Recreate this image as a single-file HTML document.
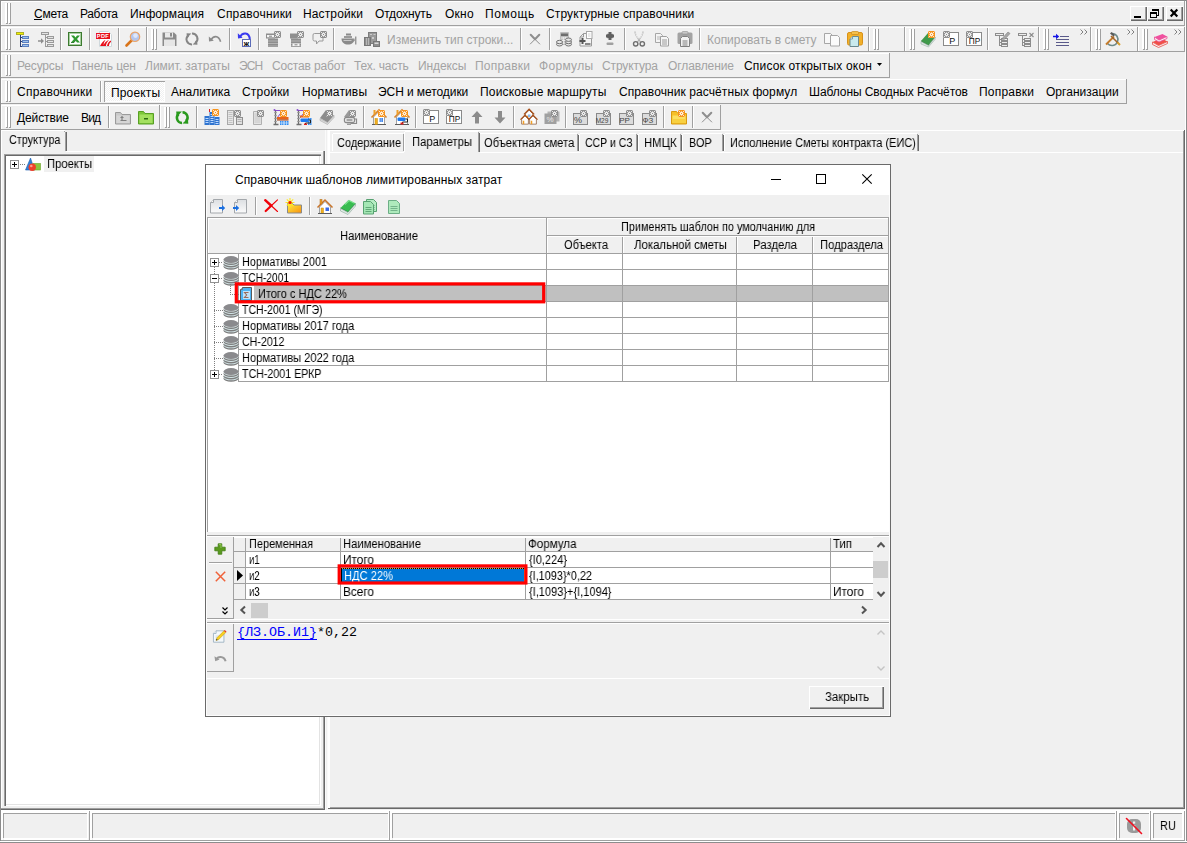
<!DOCTYPE html>
<html lang="ru"><head><meta charset="utf-8"><title>Смета</title><style>html,body{margin:0;padding:0}
body{width:1187px;height:843px;background:#f0f0f0;position:relative;overflow:hidden;font-family:"Liberation Sans",sans-serif;font-size:12px;line-height:1;color:#000}
div,span,svg{position:absolute;white-space:nowrap}
.m{transform-origin:0 0;will-change:transform}
svg{overflow:visible}
</style></head><body>
<div style="left:0px;top:0px;width:1187px;height:1px;background:#8c8c8c"></div>
<div style="left:0px;top:0px;width:1px;height:843px;background:#8c8c8c"></div>
<div style="left:1185px;top:1px;width:1px;height:842px;background:#fff"></div>
<div style="left:1186px;top:0px;width:1px;height:843px;background:#8c8c8c"></div>
<div style="left:0px;top:841px;width:1187px;height:1px;background:#fff"></div>
<div style="left:0px;top:842px;width:1187px;height:1px;background:#8c8c8c"></div>
<div style="left:1px;top:1px;width:1184px;height:1px;background:#fff"></div>
<div style="left:1px;top:1px;width:1px;height:25px;background:#fff"></div>
<div style="left:1px;top:25px;width:1184px;height:1px;background:#a0a0a0"></div>
<div style="left:1184px;top:1px;width:1px;height:25px;background:#a0a0a0"></div>
<div style="left:5px;top:3px;width:1px;height:20px;background:#fff"></div>
<div style="left:6px;top:3px;width:1px;height:20px;background:#fff"></div>
<div style="left:7px;top:3px;width:1px;height:21px;background:#a0a0a0"></div>
<div style="left:6px;top:23px;width:2px;height:1px;background:#a0a0a0"></div>
<div style="left:8px;top:3px;width:1px;height:20px;background:#fff"></div>
<div style="left:9px;top:3px;width:1px;height:20px;background:#fff"></div>
<div style="left:10px;top:3px;width:1px;height:21px;background:#a0a0a0"></div>
<div style="left:9px;top:23px;width:2px;height:1px;background:#a0a0a0"></div>
<span style="left:34px;top:8px;font-size:12px;color:#000;letter-spacing:-0.234px;">Смета</span>
<span style="left:80px;top:8px;font-size:12px;color:#000;letter-spacing:-0.342px;">Работа</span>
<span style="left:130px;top:8px;font-size:12px;color:#000;letter-spacing:0.068px;">Информация</span>
<span style="left:217px;top:8px;font-size:12px;color:#000;letter-spacing:0.210px;">Справочники</span>
<span style="left:303px;top:8px;font-size:12px;color:#000;letter-spacing:0.132px;">Настройки</span>
<span style="left:375px;top:8px;font-size:12px;color:#000;letter-spacing:-0.182px;">Отдохнуть</span>
<span style="left:445px;top:8px;font-size:12px;color:#000;letter-spacing:0.236px;">Окно</span>
<span style="left:485px;top:8px;font-size:12px;color:#000;letter-spacing:0.588px;">Помощь</span>
<span style="left:546px;top:8px;font-size:12px;color:#000;letter-spacing:0.121px;">Структурные справочники</span>
<div style="left:34px;top:19px;width:8px;height:1px;background:#000"></div>
<div style="left:1130px;top:6px;width:17px;height:15px;background:#f0f0f0;box-shadow:inset 1px 1px 0 #fff,inset -1px -1px 0 #696969,inset -2px -2px 0 #a0a0a0"></div>
<div style="left:1147px;top:6px;width:17px;height:15px;background:#f0f0f0;box-shadow:inset 1px 1px 0 #fff,inset -1px -1px 0 #696969,inset -2px -2px 0 #a0a0a0"></div>
<div style="left:1166px;top:6px;width:17px;height:15px;background:#f0f0f0;box-shadow:inset 1px 1px 0 #fff,inset -1px -1px 0 #696969,inset -2px -2px 0 #a0a0a0"></div>
<div style="left:1134px;top:16px;width:7px;height:2px;background:#000"></div>
<svg style="left:1147px;top:6px" width="17" height="15" viewBox="0 0 17 15"><g shape-rendering="crispEdges" fill="none" stroke="#000"><path d="M5 3h7v2h-7z" fill="#000" stroke="none"/><path d="M11.500 5v4h-2"/><path d="M3 6h7v2h-7z" fill="#000" stroke="none"/><path d="M3.500 8v3.500h6v-3.500"/></g></svg>
<svg style="left:1166px;top:6px" width="17" height="15" viewBox="0 0 17 15"><path d="M4.700 3.500l6.600 7M11.300 3.500l-6.600 7" stroke="#000" stroke-width="2.200"/></svg>
<div style="left:1px;top:27px;width:146px;height:1px;background:#fff"></div>
<div style="left:1px;top:27px;width:1px;height:25px;background:#fff"></div>
<div style="left:1px;top:51px;width:146px;height:1px;background:#a0a0a0"></div>
<div style="left:146px;top:27px;width:1px;height:25px;background:#a0a0a0"></div>
<div style="left:5px;top:29px;width:1px;height:20px;background:#fff"></div>
<div style="left:6px;top:29px;width:1px;height:20px;background:#fff"></div>
<div style="left:7px;top:29px;width:1px;height:21px;background:#a0a0a0"></div>
<div style="left:6px;top:49px;width:2px;height:1px;background:#a0a0a0"></div>
<div style="left:8px;top:29px;width:1px;height:20px;background:#fff"></div>
<div style="left:9px;top:29px;width:1px;height:20px;background:#fff"></div>
<div style="left:10px;top:29px;width:1px;height:21px;background:#a0a0a0"></div>
<div style="left:9px;top:49px;width:2px;height:1px;background:#a0a0a0"></div>
<div style="left:147px;top:27px;width:722px;height:1px;background:#fff"></div>
<div style="left:147px;top:27px;width:1px;height:25px;background:#fff"></div>
<div style="left:147px;top:51px;width:722px;height:1px;background:#a0a0a0"></div>
<div style="left:868px;top:27px;width:1px;height:25px;background:#a0a0a0"></div>
<div style="left:151px;top:29px;width:1px;height:20px;background:#fff"></div>
<div style="left:152px;top:29px;width:1px;height:20px;background:#fff"></div>
<div style="left:153px;top:29px;width:1px;height:21px;background:#a0a0a0"></div>
<div style="left:152px;top:49px;width:2px;height:1px;background:#a0a0a0"></div>
<div style="left:154px;top:29px;width:1px;height:20px;background:#fff"></div>
<div style="left:155px;top:29px;width:1px;height:20px;background:#fff"></div>
<div style="left:156px;top:29px;width:1px;height:21px;background:#a0a0a0"></div>
<div style="left:155px;top:49px;width:2px;height:1px;background:#a0a0a0"></div>
<div style="left:869px;top:27px;width:36px;height:1px;background:#fff"></div>
<div style="left:869px;top:27px;width:1px;height:25px;background:#fff"></div>
<div style="left:869px;top:51px;width:36px;height:1px;background:#a0a0a0"></div>
<div style="left:904px;top:27px;width:1px;height:25px;background:#a0a0a0"></div>
<div style="left:873px;top:29px;width:1px;height:20px;background:#fff"></div>
<div style="left:874px;top:29px;width:1px;height:20px;background:#fff"></div>
<div style="left:875px;top:29px;width:1px;height:21px;background:#a0a0a0"></div>
<div style="left:874px;top:49px;width:2px;height:1px;background:#a0a0a0"></div>
<div style="left:876px;top:29px;width:1px;height:20px;background:#fff"></div>
<div style="left:877px;top:29px;width:1px;height:20px;background:#fff"></div>
<div style="left:878px;top:29px;width:1px;height:21px;background:#a0a0a0"></div>
<div style="left:877px;top:49px;width:2px;height:1px;background:#a0a0a0"></div>
<div style="left:905px;top:27px;width:134px;height:1px;background:#fff"></div>
<div style="left:905px;top:27px;width:1px;height:25px;background:#fff"></div>
<div style="left:905px;top:51px;width:134px;height:1px;background:#a0a0a0"></div>
<div style="left:1038px;top:27px;width:1px;height:25px;background:#a0a0a0"></div>
<div style="left:909px;top:29px;width:1px;height:20px;background:#fff"></div>
<div style="left:910px;top:29px;width:1px;height:20px;background:#fff"></div>
<div style="left:911px;top:29px;width:1px;height:21px;background:#a0a0a0"></div>
<div style="left:910px;top:49px;width:2px;height:1px;background:#a0a0a0"></div>
<div style="left:912px;top:29px;width:1px;height:20px;background:#fff"></div>
<div style="left:913px;top:29px;width:1px;height:20px;background:#fff"></div>
<div style="left:914px;top:29px;width:1px;height:21px;background:#a0a0a0"></div>
<div style="left:913px;top:49px;width:2px;height:1px;background:#a0a0a0"></div>
<div style="left:1039px;top:27px;width:52px;height:1px;background:#fff"></div>
<div style="left:1039px;top:27px;width:1px;height:25px;background:#fff"></div>
<div style="left:1039px;top:51px;width:52px;height:1px;background:#a0a0a0"></div>
<div style="left:1090px;top:27px;width:1px;height:25px;background:#a0a0a0"></div>
<div style="left:1043px;top:29px;width:1px;height:20px;background:#fff"></div>
<div style="left:1044px;top:29px;width:1px;height:20px;background:#fff"></div>
<div style="left:1045px;top:29px;width:1px;height:21px;background:#a0a0a0"></div>
<div style="left:1044px;top:49px;width:2px;height:1px;background:#a0a0a0"></div>
<div style="left:1046px;top:29px;width:1px;height:20px;background:#fff"></div>
<div style="left:1047px;top:29px;width:1px;height:20px;background:#fff"></div>
<div style="left:1048px;top:29px;width:1px;height:21px;background:#a0a0a0"></div>
<div style="left:1047px;top:49px;width:2px;height:1px;background:#a0a0a0"></div>
<div style="left:1091px;top:27px;width:47px;height:1px;background:#fff"></div>
<div style="left:1091px;top:27px;width:1px;height:25px;background:#fff"></div>
<div style="left:1091px;top:51px;width:47px;height:1px;background:#a0a0a0"></div>
<div style="left:1137px;top:27px;width:1px;height:25px;background:#a0a0a0"></div>
<div style="left:1095px;top:29px;width:1px;height:20px;background:#fff"></div>
<div style="left:1096px;top:29px;width:1px;height:20px;background:#fff"></div>
<div style="left:1097px;top:29px;width:1px;height:21px;background:#a0a0a0"></div>
<div style="left:1096px;top:49px;width:2px;height:1px;background:#a0a0a0"></div>
<div style="left:1098px;top:29px;width:1px;height:20px;background:#fff"></div>
<div style="left:1099px;top:29px;width:1px;height:20px;background:#fff"></div>
<div style="left:1100px;top:29px;width:1px;height:21px;background:#a0a0a0"></div>
<div style="left:1099px;top:49px;width:2px;height:1px;background:#a0a0a0"></div>
<div style="left:1138px;top:27px;width:47px;height:1px;background:#fff"></div>
<div style="left:1138px;top:27px;width:1px;height:25px;background:#fff"></div>
<div style="left:1138px;top:51px;width:47px;height:1px;background:#a0a0a0"></div>
<div style="left:1184px;top:27px;width:1px;height:25px;background:#a0a0a0"></div>
<div style="left:1142px;top:29px;width:1px;height:20px;background:#fff"></div>
<div style="left:1143px;top:29px;width:1px;height:20px;background:#fff"></div>
<div style="left:1144px;top:29px;width:1px;height:21px;background:#a0a0a0"></div>
<div style="left:1143px;top:49px;width:2px;height:1px;background:#a0a0a0"></div>
<div style="left:1145px;top:29px;width:1px;height:20px;background:#fff"></div>
<div style="left:1146px;top:29px;width:1px;height:20px;background:#fff"></div>
<div style="left:1147px;top:29px;width:1px;height:21px;background:#a0a0a0"></div>
<div style="left:1146px;top:49px;width:2px;height:1px;background:#a0a0a0"></div>
<div style="left:60px;top:28px;width:1px;height:22px;background:#a0a0a0"></div>
<div style="left:61px;top:28px;width:1px;height:22px;background:#fff"></div>
<div style="left:89px;top:28px;width:1px;height:22px;background:#a0a0a0"></div>
<div style="left:90px;top:28px;width:1px;height:22px;background:#fff"></div>
<div style="left:118px;top:28px;width:1px;height:22px;background:#a0a0a0"></div>
<div style="left:119px;top:28px;width:1px;height:22px;background:#fff"></div>
<div style="left:229px;top:28px;width:1px;height:22px;background:#a0a0a0"></div>
<div style="left:230px;top:28px;width:1px;height:22px;background:#fff"></div>
<div style="left:258px;top:28px;width:1px;height:22px;background:#a0a0a0"></div>
<div style="left:259px;top:28px;width:1px;height:22px;background:#fff"></div>
<div style="left:333px;top:28px;width:1px;height:22px;background:#a0a0a0"></div>
<div style="left:334px;top:28px;width:1px;height:22px;background:#fff"></div>
<div style="left:520px;top:28px;width:1px;height:22px;background:#a0a0a0"></div>
<div style="left:521px;top:28px;width:1px;height:22px;background:#fff"></div>
<div style="left:549px;top:28px;width:1px;height:22px;background:#a0a0a0"></div>
<div style="left:550px;top:28px;width:1px;height:22px;background:#fff"></div>
<div style="left:624px;top:28px;width:1px;height:22px;background:#a0a0a0"></div>
<div style="left:625px;top:28px;width:1px;height:22px;background:#fff"></div>
<div style="left:699px;top:28px;width:1px;height:22px;background:#a0a0a0"></div>
<div style="left:700px;top:28px;width:1px;height:22px;background:#fff"></div>
<div style="left:987px;top:28px;width:1px;height:22px;background:#a0a0a0"></div>
<div style="left:988px;top:28px;width:1px;height:22px;background:#fff"></div>
<span style="left:387px;top:34px;font-size:12px;color:#a3a3a3;">Изменить тип строки...</span>
<span style="left:707px;top:34px;font-size:12px;color:#a3a3a3;letter-spacing:-0.018px;">Копировать в смету</span>
<svg style="left:1080px;top:29px" width="8" height="6" viewBox="0 0 8 6"><path d="M0.5 0.5l2.5 2.5l-2.5 2.5M4.5 0.5l2.5 2.5l-2.5 2.5" fill="none" stroke="#808080" stroke-width="1"/></svg>
<svg style="left:1127px;top:29px" width="8" height="6" viewBox="0 0 8 6"><path d="M0.5 0.5l2.5 2.5l-2.5 2.5M4.5 0.5l2.5 2.5l-2.5 2.5" fill="none" stroke="#808080" stroke-width="1"/></svg>
<svg style="left:1174px;top:29px" width="8" height="6" viewBox="0 0 8 6"><path d="M0.5 0.5l2.5 2.5l-2.5 2.5M4.5 0.5l2.5 2.5l-2.5 2.5" fill="none" stroke="#808080" stroke-width="1"/></svg>
<div style="left:1px;top:53px;width:889px;height:1px;background:#fff"></div>
<div style="left:1px;top:53px;width:1px;height:25px;background:#fff"></div>
<div style="left:1px;top:77px;width:889px;height:1px;background:#a0a0a0"></div>
<div style="left:889px;top:53px;width:1px;height:25px;background:#a0a0a0"></div>
<div style="left:5px;top:55px;width:1px;height:20px;background:#fff"></div>
<div style="left:6px;top:55px;width:1px;height:20px;background:#fff"></div>
<div style="left:7px;top:55px;width:1px;height:21px;background:#a0a0a0"></div>
<div style="left:6px;top:75px;width:2px;height:1px;background:#a0a0a0"></div>
<div style="left:8px;top:55px;width:1px;height:20px;background:#fff"></div>
<div style="left:9px;top:55px;width:1px;height:20px;background:#fff"></div>
<div style="left:10px;top:55px;width:1px;height:21px;background:#a0a0a0"></div>
<div style="left:9px;top:75px;width:2px;height:1px;background:#a0a0a0"></div>
<span style="left:17px;top:60px;font-size:12px;color:#a3a3a3;letter-spacing:-0.171px;">Ресурсы</span>
<span style="left:72px;top:60px;font-size:12px;color:#a3a3a3;letter-spacing:-0.092px;">Панель цен</span>
<span style="left:145px;top:60px;font-size:12px;color:#a3a3a3;">Лимит. затраты</span>
<span style="left:239px;top:60px;font-size:12px;color:#a3a3a3;letter-spacing:-0.834px;">ЭСН</span>
<span style="left:272px;top:60px;font-size:12px;color:#a3a3a3;letter-spacing:-0.165px;">Состав работ</span>
<span style="left:354px;top:60px;font-size:12px;color:#a3a3a3;letter-spacing:-0.191px;">Тех. часть</span>
<span style="left:418px;top:60px;font-size:12px;color:#a3a3a3;letter-spacing:-0.106px;">Индексы</span>
<span style="left:475px;top:60px;font-size:12px;color:#a3a3a3;letter-spacing:0.202px;">Поправки</span>
<span style="left:539px;top:60px;font-size:12px;color:#a3a3a3;letter-spacing:0.314px;">Формулы</span>
<span style="left:602px;top:60px;font-size:12px;color:#a3a3a3;letter-spacing:-0.130px;">Структура</span>
<span style="left:668px;top:60px;font-size:12px;color:#a3a3a3;letter-spacing:-0.101px;">Оглавление</span>
<span style="left:744px;top:60px;font-size:12px;color:#000;letter-spacing:0.177px;">Список открытых окон</span>
<svg style="left:877px;top:63px" width="5" height="3" viewBox="0 0 5 3"><path d="M0 0h5l-2.5 3z" fill="#000"/></svg>
<div style="left:1px;top:79px;width:1126px;height:1px;background:#fff"></div>
<div style="left:1px;top:79px;width:1px;height:25px;background:#fff"></div>
<div style="left:1px;top:103px;width:1126px;height:1px;background:#a0a0a0"></div>
<div style="left:1126px;top:79px;width:1px;height:25px;background:#a0a0a0"></div>
<div style="left:5px;top:81px;width:1px;height:20px;background:#fff"></div>
<div style="left:6px;top:81px;width:1px;height:20px;background:#fff"></div>
<div style="left:7px;top:81px;width:1px;height:21px;background:#a0a0a0"></div>
<div style="left:6px;top:101px;width:2px;height:1px;background:#a0a0a0"></div>
<div style="left:8px;top:81px;width:1px;height:20px;background:#fff"></div>
<div style="left:9px;top:81px;width:1px;height:20px;background:#fff"></div>
<div style="left:10px;top:81px;width:1px;height:21px;background:#a0a0a0"></div>
<div style="left:9px;top:101px;width:2px;height:1px;background:#a0a0a0"></div>
<div style="left:100px;top:81px;width:1px;height:21px;background:#a0a0a0"></div>
<div style="left:101px;top:81px;width:1px;height:21px;background:#fff"></div>
<div style="left:104px;top:81px;width:61px;height:21px;background:repeating-conic-gradient(#fff 0 25%,#f0f0f0 0 50%) 0 0/2px 2px;box-shadow:inset 1px 1px 0 #a0a0a0,inset -1px -1px 0 #fff"></div>
<span style="left:17px;top:86px;font-size:12px;color:#000;letter-spacing:0.240px;">Справочники</span>
<span style="left:171px;top:86px;font-size:12px;color:#000;letter-spacing:-0.026px;">Аналитика</span>
<span style="left:242px;top:86px;font-size:12px;color:#000;letter-spacing:0.188px;">Стройки</span>
<span style="left:302px;top:86px;font-size:12px;color:#000;letter-spacing:0.141px;">Нормативы</span>
<span style="left:378px;top:86px;font-size:12px;color:#000;letter-spacing:-0.077px;">ЭСН и методики</span>
<span style="left:480px;top:86px;font-size:12px;color:#000;letter-spacing:0.197px;">Поисковые маршруты</span>
<span style="left:619px;top:86px;font-size:12px;color:#000;letter-spacing:0.088px;">Справочник расчётных формул</span>
<span style="left:809px;top:86px;font-size:12px;color:#000;letter-spacing:-0.082px;">Шаблоны Сводных Расчётов</span>
<span style="left:979px;top:86px;font-size:12px;color:#000;letter-spacing:0.202px;">Поправки</span>
<span style="left:1046px;top:86px;font-size:12px;color:#000;letter-spacing:0.021px;">Организации</span>
<span style="left:111px;top:87px;font-size:12px;color:#000;letter-spacing:0.157px;">Проекты</span>
<div style="left:1px;top:105px;width:159px;height:1px;background:#fff"></div>
<div style="left:1px;top:105px;width:1px;height:25px;background:#fff"></div>
<div style="left:1px;top:129px;width:159px;height:1px;background:#a0a0a0"></div>
<div style="left:159px;top:105px;width:1px;height:25px;background:#a0a0a0"></div>
<div style="left:5px;top:107px;width:1px;height:20px;background:#fff"></div>
<div style="left:6px;top:107px;width:1px;height:20px;background:#fff"></div>
<div style="left:7px;top:107px;width:1px;height:21px;background:#a0a0a0"></div>
<div style="left:6px;top:127px;width:2px;height:1px;background:#a0a0a0"></div>
<div style="left:8px;top:107px;width:1px;height:20px;background:#fff"></div>
<div style="left:9px;top:107px;width:1px;height:20px;background:#fff"></div>
<div style="left:10px;top:107px;width:1px;height:21px;background:#a0a0a0"></div>
<div style="left:9px;top:127px;width:2px;height:1px;background:#a0a0a0"></div>
<div style="left:160px;top:105px;width:561px;height:1px;background:#fff"></div>
<div style="left:160px;top:105px;width:1px;height:25px;background:#fff"></div>
<div style="left:160px;top:129px;width:561px;height:1px;background:#a0a0a0"></div>
<div style="left:720px;top:105px;width:1px;height:25px;background:#a0a0a0"></div>
<div style="left:164px;top:107px;width:1px;height:20px;background:#fff"></div>
<div style="left:165px;top:107px;width:1px;height:20px;background:#fff"></div>
<div style="left:166px;top:107px;width:1px;height:21px;background:#a0a0a0"></div>
<div style="left:165px;top:127px;width:2px;height:1px;background:#a0a0a0"></div>
<div style="left:167px;top:107px;width:1px;height:20px;background:#fff"></div>
<div style="left:168px;top:107px;width:1px;height:20px;background:#fff"></div>
<div style="left:169px;top:107px;width:1px;height:21px;background:#a0a0a0"></div>
<div style="left:168px;top:127px;width:2px;height:1px;background:#a0a0a0"></div>
<span style="left:17px;top:112px;font-size:12px;color:#000;letter-spacing:-0.109px;">Действие</span>
<span style="left:81px;top:112px;font-size:12px;color:#000;letter-spacing:-0.809px;">Вид</span>
<div style="left:108px;top:106px;width:1px;height:22px;background:#a0a0a0"></div>
<div style="left:109px;top:106px;width:1px;height:22px;background:#fff"></div>
<div style="left:196px;top:106px;width:1px;height:22px;background:#a0a0a0"></div>
<div style="left:197px;top:106px;width:1px;height:22px;background:#fff"></div>
<div style="left:363px;top:106px;width:1px;height:22px;background:#a0a0a0"></div>
<div style="left:364px;top:106px;width:1px;height:22px;background:#fff"></div>
<div style="left:415px;top:106px;width:1px;height:22px;background:#a0a0a0"></div>
<div style="left:416px;top:106px;width:1px;height:22px;background:#fff"></div>
<div style="left:513px;top:106px;width:1px;height:22px;background:#a0a0a0"></div>
<div style="left:514px;top:106px;width:1px;height:22px;background:#fff"></div>
<div style="left:565px;top:106px;width:1px;height:22px;background:#a0a0a0"></div>
<div style="left:566px;top:106px;width:1px;height:22px;background:#fff"></div>
<div style="left:663px;top:106px;width:1px;height:22px;background:#a0a0a0"></div>
<div style="left:664px;top:106px;width:1px;height:22px;background:#fff"></div>
<div style="left:692px;top:106px;width:1px;height:22px;background:#a0a0a0"></div>
<div style="left:693px;top:106px;width:1px;height:22px;background:#fff"></div>
<div style="left:1px;top:810px;width:1184px;height:3px;background:#fff"></div>
<div style="left:1px;top:840px;width:1184px;height:1px;background:#a0a0a0"></div>
<div style="left:1184px;top:811px;width:1px;height:30px;background:#a0a0a0"></div>
<div style="left:3px;top:813px;width:84px;height:1px;background:#a0a0a0"></div>
<div style="left:3px;top:813px;width:1px;height:25px;background:#a0a0a0"></div>
<div style="left:4px;top:838px;width:84px;height:2px;background:#fff"></div>
<div style="left:87px;top:813px;width:1px;height:27px;background:#fff"></div>
<div style="left:2px;top:813px;width:1px;height:27px;background:#fff"></div>
<div style="left:1px;top:813px;width:1px;height:27px;background:#fff"></div>
<div style="left:92px;top:813px;width:296px;height:1px;background:#a0a0a0"></div>
<div style="left:92px;top:813px;width:1px;height:25px;background:#a0a0a0"></div>
<div style="left:93px;top:838px;width:296px;height:2px;background:#fff"></div>
<div style="left:388px;top:813px;width:1px;height:27px;background:#fff"></div>
<div style="left:91px;top:813px;width:1px;height:27px;background:#fff"></div>
<div style="left:90px;top:813px;width:1px;height:27px;background:#fff"></div>
<div style="left:392px;top:813px;width:723px;height:1px;background:#a0a0a0"></div>
<div style="left:392px;top:813px;width:1px;height:25px;background:#a0a0a0"></div>
<div style="left:393px;top:838px;width:723px;height:2px;background:#fff"></div>
<div style="left:1115px;top:813px;width:1px;height:27px;background:#fff"></div>
<div style="left:391px;top:813px;width:1px;height:27px;background:#fff"></div>
<div style="left:390px;top:813px;width:1px;height:27px;background:#fff"></div>
<div style="left:1119px;top:813px;width:30px;height:1px;background:#a0a0a0"></div>
<div style="left:1119px;top:813px;width:1px;height:25px;background:#a0a0a0"></div>
<div style="left:1120px;top:838px;width:30px;height:2px;background:#fff"></div>
<div style="left:1149px;top:813px;width:1px;height:27px;background:#fff"></div>
<div style="left:1118px;top:813px;width:1px;height:27px;background:#fff"></div>
<div style="left:1117px;top:813px;width:1px;height:27px;background:#fff"></div>
<div style="left:1153px;top:813px;width:29px;height:1px;background:#a0a0a0"></div>
<div style="left:1153px;top:813px;width:1px;height:25px;background:#a0a0a0"></div>
<div style="left:1154px;top:838px;width:29px;height:2px;background:#fff"></div>
<div style="left:1182px;top:813px;width:1px;height:27px;background:#fff"></div>
<div style="left:1152px;top:813px;width:1px;height:27px;background:#fff"></div>
<div style="left:1151px;top:813px;width:1px;height:27px;background:#fff"></div>
<div style="left:1183px;top:811px;width:1px;height:29px;background:#fff"></div>
<div style="left:89px;top:811px;width:1px;height:29px;background:#a0a0a0"></div>
<div style="left:389px;top:811px;width:1px;height:29px;background:#a0a0a0"></div>
<div style="left:1116px;top:811px;width:1px;height:29px;background:#a0a0a0"></div>
<div style="left:1150px;top:811px;width:1px;height:29px;background:#a0a0a0"></div>
<span class="m" style="left:1160px;top:820px;font-size:12.5px;color:#000;transform:scaleX(0.886);">RU</span>
<div style="left:1px;top:130px;width:64px;height:1px;background:#fff"></div>
<div style="left:1px;top:130px;width:1px;height:680px;background:#fff"></div>
<div style="left:65px;top:132px;width:1px;height:19px;background:#a0a0a0"></div>
<div style="left:66px;top:132px;width:1px;height:19px;background:#696969"></div>
<div style="left:64px;top:131px;width:1px;height:1px;background:#a0a0a0"></div>
<div style="left:66px;top:151px;width:257px;height:1px;background:#fff"></div>
<div style="left:323px;top:151px;width:1px;height:659px;background:#a0a0a0"></div>
<div style="left:324px;top:151px;width:1px;height:659px;background:#696969"></div>
<div style="left:1px;top:808px;width:323px;height:1px;background:#a0a0a0"></div>
<div style="left:1px;top:809px;width:324px;height:1px;background:#696969"></div>
<span class="m" style="left:9px;top:134px;font-size:12.5px;color:#000;transform:scaleX(0.868);">Структура</span>
<div style="left:4px;top:154px;width:317px;height:652px;background:#fff;box-shadow:inset 1px 1px 0 #a0a0a0,inset 2px 2px 0 #696969,inset -1px -1px 0 #fff,inset -2px -2px 0 #e3e3e3"></div>
<div style="left:10px;top:160px;width:9px;height:9px;background:#fff;border:1px solid #919191;box-sizing:border-box"></div>
<div style="left:12px;top:164px;width:5px;height:1px;background:#000"></div>
<div style="left:14px;top:162px;width:1px;height:5px;background:#000"></div>
<div style="left:20px;top:164px;width:5px;height:1px;background:repeating-linear-gradient(90deg,#808080 0 1px,transparent 1px 2px)"></div>
<svg style="left:25px;top:157px" width="16" height="15" viewBox="0 0 16 15"><path d="M5.5 1L0.5 13h9z" fill="#2f7fd6" stroke="#1c5fb0" stroke-width=".6"/><rect x="8" y="6.5" width="7.5" height="6.5" fill="#8cc63f" stroke="#6aa52a" stroke-width=".6"/><circle cx="7.2" cy="10.3" r="3.7" fill="#f0402c"/><circle cx="6.3" cy="9" r="1.3" fill="#ff9c8c"/></svg>
<div style="left:44px;top:156px;width:50px;height:16px;background:#f0f0f0"></div>
<span class="m" style="left:47px;top:158px;font-size:12.5px;color:#000;transform:scaleX(0.897);">Проекты</span>
<div style="left:325px;top:130px;width:1px;height:680px;background:#fafafa"></div>
<div style="left:327px;top:130px;width:1px;height:680px;background:#fafafa"></div>
<div style="left:328px;top:130px;width:856px;height:1px;background:#fff"></div>
<div style="left:328px;top:130px;width:1px;height:679px;background:#fff"></div>
<div style="left:329px;top:130px;width:1px;height:679px;background:#fff"></div>
<div style="left:1183px;top:131px;width:1px;height:677px;background:#a0a0a0"></div>
<div style="left:330px;top:807px;width:854px;height:1px;background:#a0a0a0"></div>
<div style="left:328px;top:808px;width:857px;height:1px;background:#696969"></div>
<div style="left:1184px;top:130px;width:1px;height:679px;background:#696969"></div>
<div style="left:330px;top:152px;width:853px;height:1px;background:#fff"></div>
<div style="left:333px;top:133px;width:70px;height:1px;background:#fff"></div>
<div style="left:332px;top:134px;width:1px;height:17px;background:#fff"></div>
<div style="left:403px;top:134px;width:1px;height:17px;background:#a0a0a0"></div>
<div style="left:404px;top:135px;width:1px;height:16px;background:#696969"></div>
<span class="m" style="left:337px;top:137px;font-size:12.5px;color:#000;transform:scaleX(0.879);">Содержание</span>
<div style="left:480px;top:133px;width:97px;height:1px;background:#fff"></div>
<div style="left:479px;top:134px;width:1px;height:17px;background:#fff"></div>
<div style="left:577px;top:134px;width:1px;height:17px;background:#a0a0a0"></div>
<div style="left:578px;top:135px;width:1px;height:16px;background:#696969"></div>
<span class="m" style="left:484px;top:137px;font-size:12.5px;color:#000;transform:scaleX(0.897);">Объектная смета</span>
<div style="left:580px;top:133px;width:56px;height:1px;background:#fff"></div>
<div style="left:579px;top:134px;width:1px;height:17px;background:#fff"></div>
<div style="left:636px;top:134px;width:1px;height:17px;background:#a0a0a0"></div>
<div style="left:637px;top:135px;width:1px;height:16px;background:#696969"></div>
<span class="m" style="left:585px;top:137px;font-size:12.5px;color:#000;transform:scaleX(0.840);">ССР и СЗ</span>
<div style="left:639px;top:133px;width:41px;height:1px;background:#fff"></div>
<div style="left:638px;top:134px;width:1px;height:17px;background:#fff"></div>
<div style="left:680px;top:134px;width:1px;height:17px;background:#a0a0a0"></div>
<div style="left:681px;top:135px;width:1px;height:16px;background:#696969"></div>
<span class="m" style="left:644px;top:137px;font-size:12.5px;color:#000;transform:scaleX(0.906);">НМЦК</span>
<div style="left:683px;top:133px;width:39px;height:1px;background:#fff"></div>
<div style="left:682px;top:134px;width:1px;height:17px;background:#fff"></div>
<div style="left:722px;top:134px;width:1px;height:17px;background:#a0a0a0"></div>
<div style="left:723px;top:135px;width:1px;height:16px;background:#696969"></div>
<span class="m" style="left:689px;top:137px;font-size:12.5px;color:#000;transform:scaleX(0.866);">ВОР</span>
<div style="left:725px;top:133px;width:192px;height:1px;background:#fff"></div>
<div style="left:724px;top:134px;width:1px;height:17px;background:#fff"></div>
<div style="left:917px;top:134px;width:1px;height:17px;background:#a0a0a0"></div>
<div style="left:918px;top:135px;width:1px;height:16px;background:#696969"></div>
<span class="m" style="left:730px;top:137px;font-size:12.5px;color:#000;transform:scaleX(0.877);">Исполнение Сметы контракта (ЕИС)</span>
<div style="left:404px;top:131px;width:76px;height:22px;background:#f0f0f0"></div>
<div style="left:405px;top:131px;width:73px;height:1px;background:#fff"></div>
<div style="left:404px;top:132px;width:1px;height:20px;background:#fff"></div>
<div style="left:478px;top:132px;width:1px;height:20px;background:#a0a0a0"></div>
<div style="left:479px;top:133px;width:1px;height:19px;background:#696969"></div>
<span class="m" style="left:412px;top:136px;font-size:12.5px;color:#000;transform:scaleX(0.899);">Параметры</span>
<div style="left:205px;top:164px;width:686px;height:553px;background:#f0f0f0;border:1px solid #6a6a6a;box-sizing:border-box;box-shadow:inset 0 0 0 1px #fcfcfc"></div>
<div style="left:206px;top:165px;width:684px;height:30px;background:#fff"></div>
<span style="left:235px;top:174px;font-size:12px;color:#000;letter-spacing:0.105px;">Справочник шаблонов лимитированных затрат</span>
<div style="left:771px;top:179px;width:10px;height:1px;background:#000"></div>
<div style="left:816px;top:174px;width:10px;height:10px;border:1px solid #000;box-sizing:border-box"></div>
<svg style="left:862px;top:174px" width="10" height="10" viewBox="0 0 10 10"><path d="M0.300 0.300l9.400 9.400M9.700 0.300l-9.400 9.400" stroke="#000" stroke-width="1.100" fill="none"/></svg>
<div style="left:255px;top:197px;width:1px;height:18px;background:#a0a0a0"></div>
<div style="left:256px;top:197px;width:1px;height:18px;background:#fff"></div>
<div style="left:309px;top:197px;width:1px;height:18px;background:#a0a0a0"></div>
<div style="left:310px;top:197px;width:1px;height:18px;background:#fff"></div>
<div style="left:207px;top:217px;width:682px;height:315px;background:#fff"></div>
<div style="left:207px;top:217px;width:682px;height:36px;background:#f0f0f0"></div>
<div style="left:207px;top:217px;width:682px;height:1px;background:#a0a0a0"></div>
<div style="left:207px;top:217px;width:1px;height:315px;background:#a0a0a0"></div>
<div style="left:207px;top:253px;width:682px;height:1px;background:#a0a0a0"></div>
<div style="left:547px;top:235px;width:342px;height:1px;background:#a0a0a0"></div>
<div style="left:546px;top:217px;width:1px;height:165px;background:#a0a0a0"></div>
<div style="left:622px;top:236px;width:1px;height:146px;background:#a0a0a0"></div>
<div style="left:736px;top:236px;width:1px;height:146px;background:#a0a0a0"></div>
<div style="left:812px;top:236px;width:1px;height:146px;background:#a0a0a0"></div>
<div style="left:888px;top:236px;width:1px;height:146px;background:#a0a0a0"></div>
<div style="left:888px;top:217px;width:1px;height:165px;background:#a0a0a0"></div>
<div style="left:208px;top:218px;width:338px;height:1px;background:#fff"></div>
<div style="left:208px;top:218px;width:1px;height:35px;background:#fff"></div>
<div style="left:547px;top:218px;width:341px;height:1px;background:#fff"></div>
<div style="left:547px;top:218px;width:1px;height:17px;background:#fff"></div>
<div style="left:547px;top:236px;width:1px;height:17px;background:#fff"></div>
<div style="left:623px;top:236px;width:1px;height:17px;background:#fff"></div>
<div style="left:737px;top:236px;width:1px;height:17px;background:#fff"></div>
<div style="left:813px;top:236px;width:1px;height:17px;background:#fff"></div>
<div style="left:547px;top:236px;width:341px;height:1px;background:#fff"></div>
<div style="left:254px;top:286px;width:634px;height:16px;background:#c0c0c0"></div>
<div style="left:546px;top:286px;width:1px;height:16px;background:#a0a0a0"></div>
<div style="left:622px;top:286px;width:1px;height:16px;background:#a0a0a0"></div>
<div style="left:736px;top:286px;width:1px;height:16px;background:#a0a0a0"></div>
<div style="left:812px;top:286px;width:1px;height:16px;background:#a0a0a0"></div>
<div style="left:888px;top:286px;width:1px;height:16px;background:#a0a0a0"></div>
<div style="left:238px;top:269px;width:651px;height:1px;background:#a0a0a0"></div>
<div style="left:238px;top:285px;width:651px;height:1px;background:#a0a0a0"></div>
<div style="left:238px;top:301px;width:651px;height:1px;background:#a0a0a0"></div>
<div style="left:238px;top:317px;width:651px;height:1px;background:#a0a0a0"></div>
<div style="left:238px;top:333px;width:651px;height:1px;background:#a0a0a0"></div>
<div style="left:238px;top:349px;width:651px;height:1px;background:#a0a0a0"></div>
<div style="left:238px;top:365px;width:651px;height:1px;background:#a0a0a0"></div>
<div style="left:238px;top:381px;width:651px;height:1px;background:#a0a0a0"></div>
<div style="left:238px;top:254px;width:1px;height:128px;background:#a0a0a0"></div>
<span class="m" style="left:340px;top:230px;font-size:12.5px;color:#000;transform:scaleX(0.900);">Наименование</span>
<span class="m" style="left:621px;top:221px;font-size:12.5px;color:#000;transform:scaleX(0.869);">Применять шаблон по умолчанию для</span>
<span class="m" style="left:564px;top:239px;font-size:12.5px;color:#000;transform:scaleX(0.891);">Объекта</span>
<span class="m" style="left:634px;top:239px;font-size:12.5px;color:#000;transform:scaleX(0.911);">Локальной сметы</span>
<span class="m" style="left:753px;top:239px;font-size:12.5px;color:#000;transform:scaleX(0.911);">Раздела</span>
<span class="m" style="left:820px;top:239px;font-size:12.5px;color:#000;transform:scaleX(0.897);">Подраздела</span>
<svg style="left:223px;top:256px" width="16" height="14" viewBox="0 0 16 14"><ellipse cx="8" cy="10.5" rx="7.5" ry="3.3" fill="#7d7d7d"/><ellipse cx="8" cy="9.3" rx="7.3" ry="3" fill="#d6e8ea"/><ellipse cx="8" cy="8.2" rx="7.5" ry="3.2" fill="#7d7d7d"/><ellipse cx="8" cy="7" rx="7.3" ry="3" fill="#d6e8ea"/><ellipse cx="8" cy="5.8" rx="7.5" ry="3.2" fill="#7d7d7d"/><ellipse cx="8" cy="4.6" rx="7.3" ry="3" fill="#dbe9ea"/><ellipse cx="8" cy="3.6" rx="7.5" ry="3.5" fill="#8a8a8d"/></svg>
<span class="m" style="left:242px;top:256px;font-size:12.5px;color:#000;transform:scaleX(0.869);">Нормативы 2001</span>
<svg style="left:223px;top:272px" width="16" height="14" viewBox="0 0 16 14"><ellipse cx="8" cy="10.5" rx="7.5" ry="3.3" fill="#7d7d7d"/><ellipse cx="8" cy="9.3" rx="7.3" ry="3" fill="#d6e8ea"/><ellipse cx="8" cy="8.2" rx="7.5" ry="3.2" fill="#7d7d7d"/><ellipse cx="8" cy="7" rx="7.3" ry="3" fill="#d6e8ea"/><ellipse cx="8" cy="5.8" rx="7.5" ry="3.2" fill="#7d7d7d"/><ellipse cx="8" cy="4.6" rx="7.3" ry="3" fill="#dbe9ea"/><ellipse cx="8" cy="3.6" rx="7.5" ry="3.5" fill="#8a8a8d"/></svg>
<span class="m" style="left:242px;top:272px;font-size:12.5px;color:#000;transform:scaleX(0.815);">ТСН-2001</span>
<svg style="left:223px;top:304px" width="16" height="14" viewBox="0 0 16 14"><ellipse cx="8" cy="10.5" rx="7.5" ry="3.3" fill="#7d7d7d"/><ellipse cx="8" cy="9.3" rx="7.3" ry="3" fill="#d6e8ea"/><ellipse cx="8" cy="8.2" rx="7.5" ry="3.2" fill="#7d7d7d"/><ellipse cx="8" cy="7" rx="7.3" ry="3" fill="#d6e8ea"/><ellipse cx="8" cy="5.8" rx="7.5" ry="3.2" fill="#7d7d7d"/><ellipse cx="8" cy="4.6" rx="7.3" ry="3" fill="#dbe9ea"/><ellipse cx="8" cy="3.6" rx="7.5" ry="3.5" fill="#8a8a8d"/></svg>
<span class="m" style="left:242px;top:304px;font-size:12.5px;color:#000;transform:scaleX(0.842);">ТСН-2001 (МГЭ)</span>
<svg style="left:223px;top:320px" width="16" height="14" viewBox="0 0 16 14"><ellipse cx="8" cy="10.5" rx="7.5" ry="3.3" fill="#7d7d7d"/><ellipse cx="8" cy="9.3" rx="7.3" ry="3" fill="#d6e8ea"/><ellipse cx="8" cy="8.2" rx="7.5" ry="3.2" fill="#7d7d7d"/><ellipse cx="8" cy="7" rx="7.3" ry="3" fill="#d6e8ea"/><ellipse cx="8" cy="5.8" rx="7.5" ry="3.2" fill="#7d7d7d"/><ellipse cx="8" cy="4.6" rx="7.3" ry="3" fill="#dbe9ea"/><ellipse cx="8" cy="3.6" rx="7.5" ry="3.5" fill="#8a8a8d"/></svg>
<span class="m" style="left:242px;top:320px;font-size:12.5px;color:#000;transform:scaleX(0.888);">Нормативы 2017 года</span>
<svg style="left:223px;top:336px" width="16" height="14" viewBox="0 0 16 14"><ellipse cx="8" cy="10.5" rx="7.5" ry="3.3" fill="#7d7d7d"/><ellipse cx="8" cy="9.3" rx="7.3" ry="3" fill="#d6e8ea"/><ellipse cx="8" cy="8.2" rx="7.5" ry="3.2" fill="#7d7d7d"/><ellipse cx="8" cy="7" rx="7.3" ry="3" fill="#d6e8ea"/><ellipse cx="8" cy="5.8" rx="7.5" ry="3.2" fill="#7d7d7d"/><ellipse cx="8" cy="4.6" rx="7.3" ry="3" fill="#dbe9ea"/><ellipse cx="8" cy="3.6" rx="7.5" ry="3.5" fill="#8a8a8d"/></svg>
<span class="m" style="left:242px;top:336px;font-size:12.5px;color:#000;transform:scaleX(0.849);">СН-2012</span>
<svg style="left:223px;top:352px" width="16" height="14" viewBox="0 0 16 14"><ellipse cx="8" cy="10.5" rx="7.5" ry="3.3" fill="#7d7d7d"/><ellipse cx="8" cy="9.3" rx="7.3" ry="3" fill="#d6e8ea"/><ellipse cx="8" cy="8.2" rx="7.5" ry="3.2" fill="#7d7d7d"/><ellipse cx="8" cy="7" rx="7.3" ry="3" fill="#d6e8ea"/><ellipse cx="8" cy="5.8" rx="7.5" ry="3.2" fill="#7d7d7d"/><ellipse cx="8" cy="4.6" rx="7.3" ry="3" fill="#dbe9ea"/><ellipse cx="8" cy="3.6" rx="7.5" ry="3.5" fill="#8a8a8d"/></svg>
<span class="m" style="left:242px;top:352px;font-size:12.5px;color:#000;transform:scaleX(0.888);">Нормативы 2022 года</span>
<svg style="left:223px;top:368px" width="16" height="14" viewBox="0 0 16 14"><ellipse cx="8" cy="10.5" rx="7.5" ry="3.3" fill="#7d7d7d"/><ellipse cx="8" cy="9.3" rx="7.3" ry="3" fill="#d6e8ea"/><ellipse cx="8" cy="8.2" rx="7.5" ry="3.2" fill="#7d7d7d"/><ellipse cx="8" cy="7" rx="7.3" ry="3" fill="#d6e8ea"/><ellipse cx="8" cy="5.8" rx="7.5" ry="3.2" fill="#7d7d7d"/><ellipse cx="8" cy="4.6" rx="7.3" ry="3" fill="#dbe9ea"/><ellipse cx="8" cy="3.6" rx="7.5" ry="3.5" fill="#8a8a8d"/></svg>
<span class="m" style="left:242px;top:368px;font-size:12.5px;color:#000;transform:scaleX(0.851);">ТСН-2001 ЕРКР</span>
<div style="left:210px;top:258px;width:9px;height:9px;background:#fff;border:1px solid #919191;box-sizing:border-box"></div>
<div style="left:212px;top:262px;width:5px;height:1px;background:#000"></div>
<div style="left:214px;top:260px;width:1px;height:5px;background:#000"></div>
<div style="left:219px;top:262px;width:4px;height:1px;background:repeating-linear-gradient(90deg,#808080 0 1px,transparent 1px 2px)"></div>
<div style="left:210px;top:274px;width:9px;height:9px;background:#fff;border:1px solid #919191;box-sizing:border-box"></div>
<div style="left:212px;top:278px;width:5px;height:1px;background:#000"></div>
<div style="left:219px;top:278px;width:4px;height:1px;background:repeating-linear-gradient(90deg,#808080 0 1px,transparent 1px 2px)"></div>
<div style="left:210px;top:370px;width:9px;height:9px;background:#fff;border:1px solid #919191;box-sizing:border-box"></div>
<div style="left:212px;top:374px;width:5px;height:1px;background:#000"></div>
<div style="left:214px;top:372px;width:1px;height:5px;background:#000"></div>
<div style="left:219px;top:374px;width:4px;height:1px;background:repeating-linear-gradient(90deg,#808080 0 1px,transparent 1px 2px)"></div>
<div style="left:214px;top:267px;width:1px;height:7px;background:repeating-linear-gradient(180deg,#808080 0 1px,transparent 1px 2px)"></div>
<div style="left:214px;top:283px;width:1px;height:87px;background:repeating-linear-gradient(180deg,#808080 0 1px,transparent 1px 2px)"></div>
<div style="left:214px;top:310px;width:9px;height:1px;background:repeating-linear-gradient(90deg,#808080 0 1px,transparent 1px 2px)"></div>
<div style="left:214px;top:326px;width:9px;height:1px;background:repeating-linear-gradient(90deg,#808080 0 1px,transparent 1px 2px)"></div>
<div style="left:214px;top:342px;width:9px;height:1px;background:repeating-linear-gradient(90deg,#808080 0 1px,transparent 1px 2px)"></div>
<div style="left:214px;top:358px;width:9px;height:1px;background:repeating-linear-gradient(90deg,#808080 0 1px,transparent 1px 2px)"></div>
<div style="left:230px;top:284px;width:1px;height:11px;background:repeating-linear-gradient(180deg,#808080 0 1px,transparent 1px 2px)"></div>
<div style="left:230px;top:294px;width:9px;height:1px;background:repeating-linear-gradient(90deg,#808080 0 1px,transparent 1px 2px)"></div>
<svg style="left:240px;top:287px" width="12" height="14" viewBox="0 0 12 14"><path d="M2.5 0.5h9v13h-11v-11z" fill="#4fb4f4" stroke="#5a5a5a" stroke-width="1"/><path d="M0.5 2.5h2v-2" fill="#fff" stroke="#5a5a5a" stroke-width=".8"/><rect x="3" y="4" width="7" height="8" fill="#bfe3fb"/><path d="M8.5 5.5h-4l2.2 2.5l-2.2 2.5h4" fill="none" stroke="#9a6a5a" stroke-width="1.1"/></svg>
<span class="m" style="left:258px;top:288px;font-size:12.5px;color:#000;transform:scaleX(0.881);">Итого с НДС 22%</span>
<div style="left:207px;top:535px;width:682px;height:1px;background:#a0a0a0"></div>
<div style="left:207px;top:536px;width:682px;height:1px;background:#fff"></div>
<div style="left:233px;top:537px;width:1px;height:82px;background:#a0a0a0"></div>
<div style="left:207px;top:618px;width:27px;height:1px;background:#a0a0a0"></div>
<div style="left:209px;top:562px;width:23px;height:1px;background:#a0a0a0"></div>
<div style="left:209px;top:563px;width:23px;height:1px;background:#fff"></div>
<svg style="left:214px;top:543px" width="12" height="12" viewBox="0 0 12 12"><path d="M4.2 0.8h3.6v3.4h3.4v3.6h-3.4v3.4h-3.6v-3.4h-3.4v-3.6h3.4z" fill="#5a9a1e" stroke="#3f7a10" stroke-width=".8"/><path d="M5 1.6h2v3.4" stroke="#9ad05a" stroke-width=".8" fill="none"/></svg>
<svg style="left:215px;top:571px" width="11" height="11" viewBox="0 0 11 11"><path d="M0.8 0.8l9.4 9.4M10.2 0.8l-9.4 9.4" stroke="#f0623a" stroke-width="1.5" fill="none"/></svg>
<svg style="left:222px;top:607px" width="6" height="8" viewBox="0 0 6 8"><path d="M0.5 0.5l2.5 2.5l2.5-2.5M0.5 4.5l2.5 2.5l2.5-2.5" stroke="#000" stroke-width="1.2" fill="none"/></svg>
<div style="left:234px;top:537px;width:639px;height:63px;background:#fff"></div>
<div style="left:234px;top:537px;width:639px;height:15px;background:#f0f0f0"></div>
<div style="left:234px;top:537px;width:12px;height:63px;background:#f0f0f0"></div>
<div style="left:234px;top:551px;width:639px;height:1px;background:#a0a0a0"></div>
<div style="left:234px;top:567px;width:639px;height:1px;background:#a0a0a0"></div>
<div style="left:234px;top:583px;width:639px;height:1px;background:#a0a0a0"></div>
<div style="left:234px;top:599px;width:639px;height:1px;background:#a0a0a0"></div>
<div style="left:245px;top:537px;width:1px;height:63px;background:#a0a0a0"></div>
<div style="left:340px;top:537px;width:1px;height:63px;background:#a0a0a0"></div>
<div style="left:525px;top:537px;width:1px;height:63px;background:#a0a0a0"></div>
<div style="left:830px;top:537px;width:1px;height:63px;background:#a0a0a0"></div>
<div style="left:234px;top:537px;width:639px;height:1px;background:#fff"></div>
<span class="m" style="left:249px;top:538px;font-size:12.5px;color:#000;transform:scaleX(0.878);">Переменная</span>
<span class="m" style="left:343px;top:538px;font-size:12.5px;color:#000;transform:scaleX(0.900);">Наименование</span>
<span class="m" style="left:528px;top:538px;font-size:12.5px;color:#000;transform:scaleX(0.926);">Формула</span>
<span class="m" style="left:833px;top:538px;font-size:12.5px;color:#000;transform:scaleX(0.912);">Тип</span>
<span class="m" style="left:249px;top:554px;font-size:12.5px;color:#000;transform:scaleX(0.761);">и1</span>
<span class="m" style="left:249px;top:570px;font-size:12.5px;color:#000;transform:scaleX(0.761);">и2</span>
<span class="m" style="left:249px;top:586px;font-size:12.5px;color:#000;transform:scaleX(0.761);">и3</span>
<span class="m" style="left:343px;top:554px;font-size:12.5px;color:#000;transform:scaleX(0.946);">Итого</span>
<span class="m" style="left:343px;top:586px;font-size:12.5px;color:#000;transform:scaleX(0.946);">Всего</span>
<span class="m" style="left:529px;top:554px;font-size:12.5px;color:#000;transform:scaleX(0.881);">{I0,224}</span>
<span class="m" style="left:529px;top:570px;font-size:12.5px;color:#000;transform:scaleX(0.871);">{I,1093}*0,22</span>
<span class="m" style="left:529px;top:586px;font-size:12.5px;color:#000;transform:scaleX(0.882);">{I,1093}+{I,1094}</span>
<span class="m" style="left:833px;top:586px;font-size:12.5px;color:#000;transform:scaleX(0.946);">Итого</span>
<svg style="left:237px;top:570px" width="6" height="11" viewBox="0 0 6 11"><path d="M0 0l6 5.5l-6 5.5z" fill="#000"/></svg>
<div style="left:341px;top:568px;width:184px;height:14px;background:repeating-linear-gradient(90deg,#000 0 1px,#f29a2a 1px 2px)"></div>
<div style="left:342px;top:569px;width:182px;height:13px;background:#0078d7"></div>
<span class="m" style="left:344px;top:570px;font-size:12.5px;color:#fff;transform:scaleX(0.891);">НДС 22%</span>
<div style="left:873px;top:537px;width:16px;height:64px;background:#f0f0f0"></div>
<div style="left:873px;top:561px;width:15px;height:17px;background:#cdcdcd"></div>
<svg style="left:877px;top:542px" width="8" height="6" viewBox="0 0 8 6"><path d="M0.5 5l3.5-3.700l3.500 3.700" stroke="#555" stroke-width="2" fill="none"/></svg>
<svg style="left:877px;top:591px" width="8" height="6" viewBox="0 0 8 6"><path d="M0.5 1l3.500 3.700l3.500-3.700" stroke="#555" stroke-width="2" fill="none"/></svg>
<div style="left:234px;top:601px;width:639px;height:17px;background:#f0f0f0"></div>
<div style="left:251px;top:603px;width:17px;height:15px;background:#cdcdcd"></div>
<svg style="left:240px;top:606px" width="6" height="8" viewBox="0 0 6 8"><path d="M5 0.5l-3.700 3.500l3.700 3.500" stroke="#555" stroke-width="2" fill="none"/></svg>
<svg style="left:861px;top:606px" width="6" height="8" viewBox="0 0 6 8"><path d="M1 0.5l3.700 3.500l-3.700 3.500" stroke="#555" stroke-width="2" fill="none"/></svg>
<div style="left:207px;top:619px;width:682px;height:1px;background:#fff"></div>
<div style="left:207px;top:622px;width:682px;height:1px;background:#a0a0a0"></div>
<div style="left:207px;top:623px;width:682px;height:1px;background:#fff"></div>
<div style="left:233px;top:624px;width:1px;height:48px;background:#a0a0a0"></div>
<div style="left:207px;top:671px;width:27px;height:1px;background:#a0a0a0"></div>
<span style="left:237px;top:626px;font-size:13.33px;color:#00f;font-family:'Liberation Mono',monospace;">{ЛЗ.ОБ.И1}</span>
<span style="left:317px;top:626px;font-size:13.33px;color:#000;font-family:'Liberation Mono',monospace;">*0,22</span>
<div style="left:237px;top:639px;width:80px;height:1px;background:#00f"></div>
<svg style="left:877px;top:630px" width="8" height="5" viewBox="0 0 8 5"><path d="M0.5 4.5l3.5-3.5l3.5 3.5" stroke="#c4c4c4" stroke-width="1.4" fill="none"/></svg>
<svg style="left:877px;top:666px" width="8" height="5" viewBox="0 0 8 5"><path d="M0.5 0.5l3.5 3.5l3.5-3.5" stroke="#c4c4c4" stroke-width="1.4" fill="none"/></svg>
<div style="left:207px;top:678px;width:682px;height:1px;background:#fff"></div>
<div style="left:809px;top:686px;width:75px;height:23px;background:#f0f0f0;box-shadow:inset 1px 1px 0 #fff,inset -1px -1px 0 #696969,inset -2px -2px 0 #a0a0a0"></div>
<span class="m" style="left:825px;top:691px;font-size:12.5px;color:#000;transform:scaleX(0.914);">Закрыть</span>
<svg style="left:16px;top:31px" width="16" height="16" viewBox="0 0 16 16"><g shape-rendering="crispEdges"><rect x="0" y="1" width="8" height="3" fill="#f2f200" stroke="#8c8c28" stroke-width="0"/><rect x="0" y="1" width="8" height="3" fill="none" stroke="#9a9a30" stroke-width="1" transform="translate(.5 .5) scale(.875 .667)"/><path d="M4.5 4v11h2M4.5 6.5h2M4.5 10.5h2" fill="none" stroke="#2b3f73" stroke-width="1"/><rect x="6" y="5" width="7" height="3" fill="#9cc3f0" stroke="none"/><rect x="6" y="9" width="7" height="3" fill="#9cc3f0"/><rect x="6" y="13" width="7" height="3" fill="#9cc3f0"/><path d="M6.5 5.5h6v2h-6zM6.5 9.5h6v2h-6zM6.5 13.5h6v2h-6z" fill="none" stroke="#5b7fc0" stroke-width="1"/></g></svg>
<svg style="left:38px;top:31px" width="16" height="16" viewBox="0 0 16 16"><g shape-rendering="crispEdges"><path d="M3.5 1.5h7v2h-7z" fill="#e4e4e4" stroke="#9a9a9a"/><path d="M7.5 4v11h2M7.5 6.5h2M7.5 10.5h2" fill="none" stroke="#9a9a9a"/><path d="M9.5 5.5h6v2h-6zM9.5 9.5h6v2h-6zM9.5 13.5h6v2h-6z" fill="#e4e4e4" stroke="#9a9a9a"/></g><path d="M0 9.3h3v-2l3 2.7l-3 2.7v-2h-3z" fill="#8e8e8e"/></svg>
<svg style="left:67px;top:31px" width="16" height="16" viewBox="0 0 16 16"><rect x="1.5" y="1.5" width="13" height="13" fill="#fff" stroke="#3c7a30" stroke-width="1"/><rect x="2.5" y="2.5" width="11" height="11" fill="none" stroke="#a8cfa0" stroke-width="1"/><path d="M4 4.5h3l1.5 2l1.5-2h3l-3 3.5l3 3.5h-3l-1.5-2l-1.5 2h-3l3-3.5z" fill="#2f9a2f"/><path d="M4 11.5h3l1.5-2" stroke="#1d6b1d" stroke-width=".8" fill="none"/></svg>
<svg style="left:96px;top:31px" width="16" height="16" viewBox="0 0 16 16"><path d="M3.5 0.5h9l3 3v12h-12z" fill="#fff" stroke="#cfd8dc" stroke-width="1"/><rect x="0" y="2" width="14" height="6" fill="#e8101c"/><text x="7" y="7" font-size="5.6" font-weight="bold" fill="#fff" text-anchor="middle" font-family="Liberation Sans,sans-serif" letter-spacing=".4">PDF</text><path d="M4 15c2-4 4-5.5 5.5-6c-1.5 2-2 4-2 6zM7 15c1.5-3.5 3.5-5 6-6c-2 2-3 4-3 6z" fill="#e8101c"/><path d="M11 15c.5-3 2-4.500 4-5.500v1.500c-1.500 1-2 2.500-2 4z" fill="#e8101c"/></svg>
<svg style="left:125px;top:31px" width="16" height="16" viewBox="0 0 16 16"><path d="M1.500 14.500l5.500-5.500" stroke="#d9741a" stroke-width="2.600" stroke-linecap="round"/><circle cx="10" cy="5.800" r="4.700" fill="#b4c6ee" stroke="#e8a46a" stroke-width="1.200"/><circle cx="10.500" cy="4.600" r="2.300" fill="#dfe8fb"/></svg>
<svg style="left:162px;top:31px" width="16" height="16" viewBox="0 0 16 16"><path d="M0.500 1.500h11.500l2.500 2.500v11h-14z" fill="#8a8a8a"/><rect x="3" y="1.500" width="8" height="5" fill="#e9e9e9"/><rect x="8" y="2" width="2" height="3.500" fill="#8a8a8a"/><rect x="2" y="8.500" width="11" height="6.500" fill="#e6e6e6"/></svg>
<svg style="left:185px;top:31px" width="16" height="16" viewBox="0 0 16 16"><path d="M7 13.400a5.300 5 0 0 1-3.600-8.800" fill="none" stroke="#858585" stroke-width="2"/><path d="M1.600 2.200l4.800 .2l-4.600 4.600z" fill="#858585"/><path d="M7 2.600a5.300 5 0 0 1 3.600 8.800" fill="none" stroke="#858585" stroke-width="2"/><path d="M12.400 13.800l-4.800-.2l4.600-4.600z" fill="#858585"/></svg>
<svg style="left:208px;top:31px" width="16" height="16" viewBox="0 0 16 16"><path d="M3 9.200c2-4.500 7.500-5.500 9.600 1.500" fill="none" stroke="#8c8c8c" stroke-width="1.600"/><path d="M0.800 5.600l.2 5l4.800-.8z" fill="#8c8c8c"/></svg>
<svg style="left:237px;top:31px" width="16" height="16" viewBox="0 0 16 16"><path d="M2.800 6.200c2.500-5 9.500-5.500 10 2.300" fill="none" stroke="#3a3af0" stroke-width="2"/><path d="M0.800 2.200l.2 5.300l4.600-.7z" fill="#3a3af0"/><rect x="5.500" y="8.500" width="8" height="7" fill="#fff" stroke="#5b6bb8" stroke-width="1"/><text x="9.500" y="14.500" font-size="7.500" font-weight="bold" text-anchor="middle" font-family="Liberation Sans,sans-serif" fill="#000">ж</text></svg>
<svg style="left:266px;top:31px" width="16" height="16" viewBox="0 0 16 16"><rect x="0" y="2.500" width="9" height="5" fill="#8e8e8e"/><rect x="1" y="4" width="7" height="2.300" fill="#f4f4f4"/><path d="M3 5.200h3" stroke="#666" stroke-width=".8"/><rect x="2" y="7.500" width="10" height="8.500" fill="#8e8e8e"/><path d="M2 10h10M2 12.500h10M2 15h10" stroke="#bdbdbd" stroke-width=".8"/><rect x="8" y="0" width="7" height="7" rx="1.2" fill="#8f8f8f"/><path d="M8.7 0.7L10 2M14.3 0.7L13 2M8.7 6.3L10 5M14.3 6.3L13 5" stroke="#fff" stroke-width=".9" stroke-opacity=".9"/><path d="M11.5 1.2999999999999998L13.7 3.5L11.5 5.7L9.3 3.5z" fill="#fff"/><circle cx="11.5" cy="3.5" r=".7" fill="#8f8f8f"/></svg>
<svg style="left:289px;top:31px" width="16" height="16" viewBox="0 0 16 16"><rect x="1" y="2.500" width="8" height="5" fill="#8e8e8e"/><rect x="2" y="7.500" width="10" height="8.500" fill="#8e8e8e"/><path d="M2 10h10M2 12.500h10M2 15h10" stroke="#bdbdbd" stroke-width=".8"/><rect x="3.500" y="12.500" width="7" height="2.500" fill="#f4f4f4"/><path d="M5.500 13.800h3" stroke="#666" stroke-width=".8"/><rect x="8" y="0" width="7" height="7" rx="1.2" fill="#8f8f8f"/><path d="M8.7 0.7L10 2M14.3 0.7L13 2M8.7 6.3L10 5M14.3 6.3L13 5" stroke="#fff" stroke-width=".9" stroke-opacity=".9"/><path d="M11.5 1.2999999999999998L13.7 3.5L11.5 5.7L9.3 3.5z" fill="#fff"/><circle cx="11.5" cy="3.5" r=".7" fill="#8f8f8f"/></svg>
<svg style="left:312px;top:31px" width="16" height="16" viewBox="0 0 16 16"><path d="M2.500 2.500h8.500v7.500h-4l-2.500 3v-3h-2q-1.500 0-1.500-1.500v-4.500q0-1.500 1.500-1.500z" fill="none" stroke="#9a9a9a" stroke-width="1"/><rect x="8" y="0" width="7" height="7" rx="1.2" fill="#8f8f8f"/><path d="M8.7 0.7L10 2M14.3 0.7L13 2M8.7 6.3L10 5M14.3 6.3L13 5" stroke="#fff" stroke-width=".9" stroke-opacity=".9"/><path d="M11.5 1.2999999999999998L13.7 3.5L11.5 5.7L9.3 3.5z" fill="#fff"/><circle cx="11.5" cy="3.5" r=".7" fill="#8f8f8f"/></svg>
<svg style="left:341px;top:31px" width="16" height="16" viewBox="0 0 16 16"><path d="M0.500 7.500h13c0 4-3 6-6.500 6s-6.500-2-6.500-6z" fill="#8a8a8a"/><rect x="5" y="2.500" width="5" height="2" fill="#8a8a8a"/><rect x="3" y="5" width="8" height="2" fill="#9a9a9a"/><path d="M2.500 9.500h8" stroke="#c8c8c8" stroke-width="1"/><path d="M14.800 5.500v8" stroke="#707070" stroke-width="1"/><path d="M12 8.500h2.500v2.500z" fill="#a0a0a0"/></svg>
<svg style="left:364px;top:31px" width="16" height="16" viewBox="0 0 16 16"><rect x="4.500" y="1.500" width="8" height="11" fill="#9a9a9a" stroke="#7c7c7c"/><path d="M6 3.500h2M9.500 3.500h2M8 6l2 2M10 6l-2 2" stroke="#d8d8d8" stroke-width=".8"/><rect x="0.500" y="6.500" width="6" height="8" fill="#8e8e8e" stroke="#777"/><path d="M2.500 7v7M4.500 7v7" stroke="#c8c8c8" stroke-width=".7"/><rect x="9.500" y="10.500" width="6" height="5" fill="#8e8e8e" stroke="#777"/><rect x="10.500" y="11.500" width="4" height="1.500" fill="#d8d8d8"/></svg>
<svg style="left:527px;top:31px" width="16" height="16" viewBox="0 0 16 16"><path d="M8 8.300l-4.300-4.500M8 8.300l4.300-4.500" stroke="#8e8e8e" stroke-width="2" stroke-linecap="round"/><path d="M8 8.300l-4.700 4.700M8 8.300l4.700 4.700" stroke="#8e8e8e" stroke-width="1" stroke-linecap="round"/></svg>
<svg style="left:556px;top:31px" width="16" height="16" viewBox="0 0 16 16"><rect x="4" y="1" width="9" height="13" rx="1" fill="#bdbdbd"/><rect x="5" y="2.500" width="7" height="2.500" fill="#6e6e6e"/><path d="M5 7h7M5 9.500h7M5 12h7M7.300 6v7M9.700 6v7" stroke="#f0f0f0" stroke-width=".9"/><g fill="#e6e6e6" stroke="#707070" stroke-width="1"><ellipse cx="3.500" cy="13.300" rx="3" ry="1.700"/><ellipse cx="3.500" cy="11" rx="3" ry="1.700"/><ellipse cx="12.500" cy="13.300" rx="3" ry="1.700"/><ellipse cx="12.500" cy="11" rx="3" ry="1.700"/><ellipse cx="12.500" cy="8.700" rx="3" ry="1.700"/></g></svg>
<svg style="left:579px;top:31px" width="16" height="16" viewBox="0 0 16 16"><path d="M4.500 2.500h8v12.500h-11.500v-9z" fill="#f4f4f4" stroke="#9a9a9a"/><path d="M1 6h3.500v-3.500" fill="none" stroke="#9a9a9a"/><rect x="7.500" y="0.500" width="5.500" height="7" fill="#fff" stroke="#a8a8a8"/><path d="M9 3h2.500M9 5h2.500" stroke="#c0c0c0" stroke-width=".7"/><path d="M0.500 10h6M3.500 7v6" stroke="#555" stroke-width="2"/><path d="M6 13h5.500" stroke="#888" stroke-width="2"/></svg>
<svg style="left:602px;top:31px" width="16" height="16" viewBox="0 0 16 16"><path d="M4 5h8M8 1v8" stroke="#606060" stroke-width="3"/><path d="M5.500 3l5 4M10.500 3l-5 4" stroke="#606060" stroke-width="1.500"/><rect x="4.500" y="11.500" width="7" height="2.500" rx="1" fill="#a0a0a0"/></svg>
<svg style="left:631px;top:31px" width="16" height="16" viewBox="0 0 16 16"><path d="M4 0.500c0 3 2 6 5.500 10.500M12 0.500c0 3-2 6-5.500 10.500" fill="none" stroke="#b0b0b0" stroke-width="1.200"/><path d="M4 0.500c0 3 2 6 4 8.500M12 0.500c0 3-2 6-4 8.500" fill="#f6f6f6" stroke="none"/><circle cx="4.700" cy="12.800" r="2.200" fill="none" stroke="#6e6e6e" stroke-width="1.400"/><circle cx="11.300" cy="12.800" r="2.200" fill="none" stroke="#6e6e6e" stroke-width="1.400"/></svg>
<svg style="left:654px;top:31px" width="16" height="16" viewBox="0 0 16 16"><path d="M1.500 2.500h5l2 2v7h-7z" fill="#f4f4f4" stroke="#a6a6a6"/><path d="M3 6h4M3 8h4" stroke="#b0b0b0" stroke-width=".9"/><path d="M6.500 5.500h6l2 2v7.500h-8z" fill="#f6f6f6" stroke="#a0a0a0"/><path d="M8 9h5M8 11h5M8 13h5" stroke="#9a9a9a" stroke-width="1"/></svg>
<svg style="left:677px;top:31px" width="16" height="16" viewBox="0 0 16 16"><rect x="0.500" y="1.500" width="15" height="11.500" rx="1.500" fill="#a3a3a3"/><rect x="5" y="0.500" width="6" height="2.500" rx="1" fill="#c8c8c8" stroke="#909090" stroke-width=".6"/><path d="M5.500 5.500h5l2 2v8h-9v-8z" fill="#f2f2f2" stroke="#808080"/><path d="M5.500 10h5M5.500 12h5M5.500 14h5" stroke="#808080" stroke-width="1"/></svg>
<svg style="left:824px;top:31px" width="16" height="16" viewBox="0 0 16 16"><path d="M0.500 2.500h6l2 2v8h-8z" fill="#f8f8f8" stroke="#a6a6a6"/><path d="M6.500 4.500h7l2 2v8.500h-9z" fill="#fbfbfb" stroke="#a6a6a6"/></svg>
<svg style="left:847px;top:31px" width="16" height="16" viewBox="0 0 16 16"><rect x="0.500" y="1.500" width="15" height="12.500" rx="1.500" fill="#f2b02a" stroke="#d8921a"/><rect x="4.500" y="0.500" width="7" height="3" rx="1" fill="#f5c04a" stroke="#c88a1a" stroke-width=".7"/><path d="M5.500 5.500h6v10h-8.500v-7.500z" fill="#c9eaee" stroke="#6a8a90"/><path d="M3 8h2.500v-2.500" fill="#e8f6f8" stroke="#6a8a90" stroke-width=".8"/></svg>
<svg style="left:920px;top:31px" width="16" height="16" viewBox="0 0 16 16"><path d="M1 10l7-8l7 4.500l-6.500 8z" fill="#3f9a4a"/><path d="M1 10l7.500 4.500l6.500-8" fill="none" stroke="#2c7a36" stroke-width="1"/><path d="M1 10.500v2.500l7.500 3l6.500-7.500v-2l-6.500 8z" fill="#dfe8e4" stroke="#9ab0a8" stroke-width=".6"/><rect x="8" y="0" width="7" height="7" rx="1.2" fill="#f7941d"/><path d="M8.7 0.7L10 2M14.3 0.7L13 2M8.7 6.3L10 5M14.3 6.3L13 5" stroke="#fff" stroke-width=".9" stroke-opacity=".9"/><path d="M11.5 1.2999999999999998L13.7 3.5L11.5 5.7L9.3 3.5z" fill="#fff"/><circle cx="11.5" cy="3.5" r=".7" fill="#f7941d"/></svg>
<svg style="left:943px;top:31px" width="16" height="16" viewBox="0 0 16 16"><rect x="0.500" y="1.500" width="15" height="13" fill="#fff" stroke="#8a8a8a"/><rect x="0" y="0" width="7" height="7" rx="1.2" fill="#8f8f8f"/><path d="M0.7 0.7L2 2M6.3 0.7L5 2M0.7 6.3L2 5M6.3 6.3L5 5" stroke="#fff" stroke-width=".9" stroke-opacity=".9"/><path d="M3.5 1.2999999999999998L5.7 3.5L3.5 5.7L1.2999999999999998 3.5z" fill="#fff"/><circle cx="3.5" cy="3.5" r=".7" fill="#8f8f8f"/><text x="9.300" y="13" font-size="9" text-anchor="middle" font-family="Liberation Sans,sans-serif" fill="#111">Р</text></svg>
<svg style="left:966px;top:31px" width="16" height="16" viewBox="0 0 16 16"><rect x="0.500" y="1.500" width="15" height="13" fill="#fff" stroke="#8a8a8a"/><rect x="0" y="0" width="7" height="7" rx="1.2" fill="#8f8f8f"/><path d="M0.7 0.7L2 2M6.3 0.7L5 2M0.7 6.3L2 5M6.3 6.3L5 5" stroke="#fff" stroke-width=".9" stroke-opacity=".9"/><path d="M3.5 1.2999999999999998L5.7 3.5L3.5 5.7L1.2999999999999998 3.5z" fill="#fff"/><circle cx="3.5" cy="3.5" r=".7" fill="#8f8f8f"/><text x="8.500" y="13" font-size="8.3" text-anchor="middle" font-family="Liberation Sans,sans-serif" fill="#111">ПР</text></svg>
<svg style="left:995px;top:31px" width="16" height="16" viewBox="0 0 16 16"><g shape-rendering="crispEdges" fill="#ededed" stroke="#8c8c8c"><path d="M0.500 2.500h8v2h-8z"/><path d="M4.500 5v9h2M4.500 8.500h2M4.500 11.500h2" fill="none"/><path d="M6.500 7.500h6v2h-6zM6.500 10.500h6v2h-6zM6.500 13.500h6v2h-6z"/></g><path d="M8 6.500l5-5.500l2 1.500l-5 5.500l-2.500.5z" fill="#a8a8a8" stroke="#808080" stroke-width=".6"/></svg>
<svg style="left:1018px;top:31px" width="16" height="16" viewBox="0 0 16 16"><g shape-rendering="crispEdges" fill="#ededed" stroke="#8c8c8c"><path d="M0.500 2.500h8v2h-8z"/><path d="M4.500 5v9h2M4.500 8.500h2M4.500 11.500h2" fill="none"/><path d="M6.500 7.500h6v2h-6zM6.500 10.500h6v2h-6zM6.500 13.500h6v2h-6z"/></g><path d="M11.500 2l4 4M15.500 2l-4 4" stroke="#8c8c8c" stroke-width="1.100"/></svg>
<svg style="left:1054px;top:31px" width="16" height="16" viewBox="0 0 16 16"><path d="M6 5.500h9M2 8.500h13M2 11.500h13M2 14.500h13" stroke="#5a5a8a" stroke-width="1" shape-rendering="crispEdges"/><path d="M-1 4.700h3v-1.900l3.200 2.700l-3.200 2.700v-1.900h-3z" fill="#1414e6"/></svg>
<svg style="left:1105px;top:31px" width="16" height="16" viewBox="0 0 16 16"><path d="M7 2.500a6 6 0 1 1-4.500 10" fill="none" stroke="#6e8a8a" stroke-width="1.600"/><path d="M1 13.500l8-8" stroke="#c47a2a" stroke-width="1.800"/><path d="M5 2.500l3.500 3l1.500-1.500l-3.500-3z" fill="#5a5a5a"/><path d="M6 5l8 8" stroke="#a0642a" stroke-width="1.600"/><path d="M12.500 11.500l2.500 2.500" stroke="#d8a030" stroke-width="2"/></svg>
<svg style="left:1152px;top:31px" width="16" height="16" viewBox="0 0 16 16"><g transform="translate(0 1.500)"><path d="M0.500 9.500l9-3.500l6 3l-9 4z" fill="#f0504a"/><path d="M0.500 9.500v2.500l6 3l9-4v-2l-9 4z" fill="#fbeaea" stroke="#e8504a" stroke-width=".8"/><path d="M2.500 4.500l8-3l4.500 2.500l-8 3.500z" fill="#f050a0"/><path d="M2.500 4.500v2.500l4.500 2.500l8-3.500v-2l-8 3.500z" fill="#fdeef6" stroke="#e84a90" stroke-width=".8"/></g></svg>
<svg style="left:115px;top:110px" width="16" height="16" viewBox="0 0 16 16"><g transform="translate(0 -1)"><path d="M0.500 3.500h5l1.500 2h8.500v9.500h-15z" fill="#c9c9c9" stroke="#9a9a9a"/><rect x="1.500" y="6.500" width="13" height="7.500" fill="#d6d6d6"/><path d="M5.500 11.500h6M7 11.500v-3.500" stroke="#808080" stroke-width="1.200" fill="none"/><path d="M5 9l2-2.200l2 2.200z" fill="#808080"/></g></svg>
<svg style="left:138px;top:110px" width="16" height="16" viewBox="0 0 16 16"><g transform="translate(0 -1)"><path d="M0.500 2.500h5l1.500 2h8.500v10.500h-15z" fill="#7cc63a" stroke="#58a024"/><rect x="1.500" y="5.500" width="13" height="8.500" fill="#a4e060"/><rect x="6" y="9" width="4" height="1.500" fill="#2c6a10"/></g></svg>
<svg style="left:175px;top:110px" width="16" height="16" viewBox="0 0 16 16"><g transform="translate(0 -1)"><path d="M7 14a5.300 5.200 0 0 1-3.400-9" fill="none" stroke="#2a9a1e" stroke-width="2.500"/><path d="M1.200 2.400l5.800 .2l-5.400 5.400z" fill="#2a9a1e"/><path d="M7.500 3.200a5.300 5.200 0 0 1 3.400 9" fill="none" stroke="#2a9a1e" stroke-width="2.500"/><path d="M13.300 14.800l-5.800-.2l5.400-5.400z" fill="#2a9a1e"/></g></svg>
<svg style="left:204px;top:110px" width="16" height="16" viewBox="0 0 16 16"><g transform="translate(0 -1)"><rect x="0.500" y="7" width="5" height="9" fill="#2f74d0"/><rect x="5.500" y="3" width="5" height="13" fill="#2f74d0"/><rect x="10.500" y="8" width="5" height="8" fill="#2f74d0"/><path d="M1.500 9.500h3M1.500 11.500h3M1.500 13.500h3M6.500 9.500h3M6.500 11.500h3M6.500 13.500h3M11.500 10.500h3M11.500 12.500h3M11.500 14.500h3M6.500 7.500h3M6.500 5.500h3" stroke="#bcd8ff" stroke-width="1"/><rect x="8" y="0" width="7" height="7" rx="1.2" fill="#f7941d"/><path d="M8.7 0.7L10 2M14.3 0.7L13 2M8.7 6.3L10 5M14.3 6.3L13 5" stroke="#fff" stroke-width=".9" stroke-opacity=".9"/><path d="M11.5 1.2999999999999998L13.7 3.5L11.5 5.7L9.3 3.5z" fill="#fff"/><circle cx="11.5" cy="3.5" r=".7" fill="#f7941d"/><path d="M5.500 0v3" stroke="#e02020" stroke-width="1"/></g></svg>
<svg style="left:227px;top:110px" width="16" height="16" viewBox="0 0 16 16"><g transform="translate(0 -1)"><rect x="0.500" y="1.500" width="6" height="14" fill="#e6e6e6" stroke="#a8a8a8"/><path d="M1.500 3.500h4M1.500 5.500h4M1.500 7.500h4M1.500 9.500h4M1.500 11.500h4M1.500 13.500h4" stroke="#bdbdbd" stroke-width=".9"/><rect x="9.500" y="8.500" width="6" height="7" fill="#e0e0e0" stroke="#8e8e8e"/><path d="M10.500 10.500h4M10.500 12.500h4" stroke="#aaa" stroke-width=".9"/><rect x="7" y="1" width="7" height="7" rx="1.2" fill="#8f8f8f"/><path d="M7.7 1.7L9 3M13.3 1.7L12 3M7.7 7.3L9 6M13.3 7.3L12 6" stroke="#fff" stroke-width=".9" stroke-opacity=".9"/><path d="M10.5 2.3L12.7 4.5L10.5 6.7L8.3 4.5z" fill="#fff"/><circle cx="10.5" cy="4.5" r=".7" fill="#8f8f8f"/></g></svg>
<svg style="left:250px;top:110px" width="16" height="16" viewBox="0 0 16 16"><g transform="translate(0 -1)"><path d="M3.500 2.500h8v13h-8z" fill="#e4e4e4" stroke="#b0b0b0"/><path d="M4.500 5h6M4.500 7h6M4.500 9h6M4.500 11h6M4.500 13h6" stroke="#c4c4c4" stroke-width=".9"/><rect x="7" y="1" width="7" height="7" rx="1.2" fill="#8f8f8f"/><path d="M7.7 1.7L9 3M13.3 1.7L12 3M7.7 7.3L9 6M13.3 7.3L12 6" stroke="#fff" stroke-width=".9" stroke-opacity=".9"/><path d="M10.5 2.3L12.7 4.5L10.5 6.7L8.3 4.5z" fill="#fff"/><circle cx="10.5" cy="4.5" r=".7" fill="#8f8f8f"/></g></svg>
<svg style="left:273px;top:110px" width="16" height="16" viewBox="0 0 16 16"><g transform="translate(0 -1)"><path d="M2.500 1v15M0.500 15.500h5" stroke="#6e6e6e" stroke-width="1.300"/><path d="M1 3.500h3M1 6.500h3M1 9.500h3M1 12.500h3" stroke="#9a9a9a" stroke-width=".8"/><path d="M2.500 1.500h6M4 9l5-6.500" stroke="#8a4ad0" stroke-width="1"/><circle cx="1.500" cy="1" r="1" fill="#8a4ad0"/><rect x="4" y="8" width="11.500" height="2.500" fill="#e8641a"/><rect x="4" y="10.500" width="11.500" height="1" fill="#a03a10"/><g fill="#2f8af0"><rect x="7" y="12" width="3.500" height="4"/><rect x="11.500" y="12" width="4" height="4"/></g><path d="M7 14h8.500M8.700 12v4M13.500 12v4" stroke="#cfe6ff" stroke-width=".7"/><rect x="7" y="1" width="7" height="7" rx="1.2" fill="#f7941d"/><path d="M7.7 1.7L9 3M13.3 1.7L12 3M7.7 7.3L9 6M13.3 7.3L12 6" stroke="#fff" stroke-width=".9" stroke-opacity=".9"/><path d="M10.5 2.3L12.7 4.5L10.5 6.7L8.3 4.5z" fill="#fff"/><circle cx="10.5" cy="4.5" r=".7" fill="#f7941d"/></g></svg>
<svg style="left:296px;top:110px" width="16" height="16" viewBox="0 0 16 16"><g transform="translate(0 -1)"><path d="M2.500 1v15M0.500 15.500h5" stroke="#6e6e6e" stroke-width="1.300"/><path d="M1 3.500h3M1 6.500h3M1 9.500h3M1 12.500h3" stroke="#9a9a9a" stroke-width=".8"/><path d="M2.500 1.500h6M4 9l5-6.500" stroke="#8a4ad0" stroke-width="1"/><circle cx="1.500" cy="1" r="1" fill="#8a4ad0"/><rect x="4" y="6.500" width="9" height="2" fill="#e8641a"/><rect x="12" y="9" width="3.500" height="7" fill="#2f8af0"/><path d="M13.700 9v7M12 11.500h3.500M12 14h3.500" stroke="#cfe6ff" stroke-width=".6"/><rect x="4.500" y="9.500" width="8" height="3.500" rx="1" fill="#1e7af0"/><path d="M12.500 11h2v3h-5v1.500" fill="none" stroke="#222" stroke-width="1"/><rect x="8" y="14.500" width="3" height="1.500" fill="#e02020"/><rect x="7" y="1" width="7" height="7" rx="1.2" fill="#f7941d"/><path d="M7.7 1.7L9 3M13.3 1.7L12 3M7.7 7.3L9 6M13.3 7.3L12 6" stroke="#fff" stroke-width=".9" stroke-opacity=".9"/><path d="M10.5 2.3L12.7 4.5L10.5 6.7L8.3 4.5z" fill="#fff"/><circle cx="10.5" cy="4.5" r=".7" fill="#f7941d"/></g></svg>
<svg style="left:319px;top:110px" width="16" height="16" viewBox="0 0 16 16"><g transform="translate(0 -1)"><path d="M1 9l6-8c2 0 3 1 3 2.500l5 3l-6.500 7z" fill="#8c8c8c"/><path d="M1 9.500v2l7.500 4l6.500-7v-2l-6.500 7z" fill="#d8d8d8" stroke="#a8a8a8" stroke-width=".6"/><rect x="7" y="1" width="7" height="7" rx="1.2" fill="#8f8f8f"/><path d="M7.7 1.7L9 3M13.3 1.7L12 3M7.7 7.3L9 6M13.3 7.3L12 6" stroke="#fff" stroke-width=".9" stroke-opacity=".9"/><path d="M10.5 2.3L12.7 4.5L10.5 6.7L8.3 4.5z" fill="#fff"/><circle cx="10.5" cy="4.5" r=".7" fill="#8f8f8f"/></g></svg>
<svg style="left:342px;top:110px" width="16" height="16" viewBox="0 0 16 16"><g transform="translate(0 -1)"><path d="M2 8l5-7c2 0 3 1 3 2.500l3 2l-2 3z" fill="#9a9a9a"/><rect x="2.500" y="8.500" width="10" height="5" rx="1.500" fill="#f4f4f4" stroke="#8a8a8a" stroke-width="1.300"/><rect x="4.500" y="10" width="6" height="2" fill="#a6a6a6"/><path d="M12.500 10h2v4.500h-6" fill="none" stroke="#8a8a8a" stroke-width="1.200"/><path d="M5 14.500h4v1.500h-4z" fill="#9a9a9a"/><rect x="7" y="1" width="7" height="7" rx="1.2" fill="#8f8f8f"/><path d="M7.7 1.7L9 3M13.3 1.7L12 3M7.7 7.3L9 6M13.3 7.3L12 6" stroke="#fff" stroke-width=".9" stroke-opacity=".9"/><path d="M10.5 2.3L12.7 4.5L10.5 6.7L8.3 4.5z" fill="#fff"/><circle cx="10.5" cy="4.5" r=".7" fill="#8f8f8f"/></g></svg>
<svg style="left:371px;top:110px" width="16" height="16" viewBox="0 0 16 16"><g transform="translate(0 -1)"><path d="M2.500 8v7.500h11v-7.500l-5.500-5.500z" fill="#fff" stroke="#8a8a8a" stroke-width=".8"/><path d="M0.500 8.500l7.500-7.500l7.500 7.500" fill="none" stroke="#d8842a" stroke-width="1.600"/><rect x="2.500" y="1" width="2" height="4.500" fill="#f0a028"/><path d="M1 15.500h14" stroke="#5a5a5a" stroke-width="1"/><rect x="4" y="9.500" width="2.500" height="6" fill="#f0b020" stroke="#c88a10" stroke-width=".5"/><rect x="8.500" y="9" width="3.500" height="4" fill="#4a8ae8"/><path d="M10.200 9v4" stroke="#bcd8ff" stroke-width=".6"/><rect x="7" y="1" width="7" height="7" rx="1.2" fill="#f7941d"/><path d="M7.7 1.7L9 3M13.3 1.7L12 3M7.7 7.3L9 6M13.3 7.3L12 6" stroke="#fff" stroke-width=".9" stroke-opacity=".9"/><path d="M10.5 2.3L12.7 4.5L10.5 6.7L8.3 4.5z" fill="#fff"/><circle cx="10.5" cy="4.5" r=".7" fill="#f7941d"/></g></svg>
<svg style="left:394px;top:110px" width="16" height="16" viewBox="0 0 16 16"><g transform="translate(0 -1)"><path d="M2.500 8v7.500h11v-7.500l-5.500-5.500z" fill="#fff" stroke="#8a8a8a" stroke-width=".8"/><path d="M0.500 8.500l7.500-7.500l7.500 7.500" fill="none" stroke="#d8842a" stroke-width="1.600"/><rect x="2.500" y="1" width="2" height="4.500" fill="#f0a028"/><path d="M1 15.500h14" stroke="#5a5a5a" stroke-width="1"/><rect x="3.500" y="8.500" width="8" height="3.500" rx="1" fill="#1e7af0"/><path d="M11.500 10h2v3h-5v1.500" fill="none" stroke="#222" stroke-width="1"/><rect x="6.500" y="13.500" width="3" height="2" fill="#e02020"/><rect x="7" y="1" width="7" height="7" rx="1.2" fill="#f7941d"/><path d="M7.7 1.7L9 3M13.3 1.7L12 3M7.7 7.3L9 6M13.3 7.3L12 6" stroke="#fff" stroke-width=".9" stroke-opacity=".9"/><path d="M10.5 2.3L12.7 4.5L10.5 6.7L8.3 4.5z" fill="#fff"/><circle cx="10.5" cy="4.5" r=".7" fill="#f7941d"/></g></svg>
<svg style="left:423px;top:110px" width="16" height="16" viewBox="0 0 16 16"><g transform="translate(0 -1)"><rect x="0.500" y="1.500" width="15" height="13" fill="#fff" stroke="#8a8a8a"/><rect x="0" y="0" width="7" height="7" rx="1.2" fill="#8f8f8f"/><path d="M0.7 0.7L2 2M6.3 0.7L5 2M0.7 6.3L2 5M6.3 6.3L5 5" stroke="#fff" stroke-width=".9" stroke-opacity=".9"/><path d="M3.5 1.2999999999999998L5.7 3.5L3.5 5.7L1.2999999999999998 3.5z" fill="#fff"/><circle cx="3.5" cy="3.5" r=".7" fill="#8f8f8f"/><text x="9.300" y="13" font-size="9" text-anchor="middle" font-family="Liberation Sans,sans-serif" fill="#111">Р</text></g></svg>
<svg style="left:446px;top:110px" width="16" height="16" viewBox="0 0 16 16"><g transform="translate(0 -1)"><rect x="0.500" y="1.500" width="15" height="13" fill="#fff" stroke="#8a8a8a"/><rect x="0" y="0" width="7" height="7" rx="1.2" fill="#8f8f8f"/><path d="M0.7 0.7L2 2M6.3 0.7L5 2M0.7 6.3L2 5M6.3 6.3L5 5" stroke="#fff" stroke-width=".9" stroke-opacity=".9"/><path d="M3.5 1.2999999999999998L5.7 3.5L3.5 5.7L1.2999999999999998 3.5z" fill="#fff"/><circle cx="3.5" cy="3.5" r=".7" fill="#8f8f8f"/><text x="8.500" y="13" font-size="8.3" text-anchor="middle" font-family="Liberation Sans,sans-serif" fill="#111">ПР</text></g></svg>
<svg style="left:469px;top:110px" width="16" height="16" viewBox="0 0 16 16"><g transform="translate(0 -1)"><path d="M8 2l5.500 6h-3.500v6.500h-4v-6.500h-3.500z" fill="#8c8c8c"/></g></svg>
<svg style="left:492px;top:110px" width="16" height="16" viewBox="0 0 16 16"><g transform="translate(0 -1)"><path d="M8 14.500l5.500-6h-3.500v-6.500h-4v6.500h-3.500z" fill="#8c8c8c"/></g></svg>
<svg style="left:521px;top:110px" width="16" height="16" viewBox="0 0 16 16"><g transform="translate(0 -1)"><g transform="translate(3 -1) scale(0.85)"><path d="M1.500 7v6.500h9v-6.500l-4.500-4.500z" fill="#fff" stroke="#8a5a3a" stroke-width="1"/><path d="M0 7.500l6-6l6 6" fill="none" stroke="#a8501a" stroke-width="1.600"/><rect x="3" y="9" width="2" height="4.500" fill="#f0a028"/></g><g transform="translate(-0.5 5) scale(0.75)"><path d="M1.500 7v6.500h9v-6.500l-4.500-4.500z" fill="#fff" stroke="#8a5a3a" stroke-width="1"/><path d="M0 7.500l6-6l6 6" fill="none" stroke="#a8501a" stroke-width="1.600"/><rect x="3" y="9" width="2" height="4.500" fill="#f0a028"/></g><g transform="translate(7.5 5) scale(0.75)"><path d="M1.500 7v6.500h9v-6.500l-4.500-4.500z" fill="#fff" stroke="#8a5a3a" stroke-width="1"/><path d="M0 7.500l6-6l6 6" fill="none" stroke="#a8501a" stroke-width="1.600"/><rect x="3" y="9" width="2" height="4.500" fill="#f0a028"/></g><rect x="7" y="5.500" width="2.500" height="2.500" fill="#8ab8f0"/></g></svg>
<svg style="left:544px;top:110px" width="16" height="16" viewBox="0 0 16 16"><g transform="translate(0 -1)"><rect x="3.500" y="2.500" width="12" height="10" fill="#b4b4b4"/><rect x="0.500" y="4.500" width="12" height="10.500" fill="#a0a0a0"/><text x="6" y="13" font-size="8" text-anchor="middle" font-family="Liberation Sans,sans-serif" fill="#e8e8e8">%</text><rect x="7" y="1" width="7" height="7" rx="1.2" fill="#8f8f8f"/><path d="M7.7 1.7L9 3M13.3 1.7L12 3M7.7 7.3L9 6M13.3 7.3L12 6" stroke="#fff" stroke-width=".9" stroke-opacity=".9"/><path d="M10.5 2.3L12.7 4.5L10.5 6.7L8.3 4.5z" fill="#fff"/><circle cx="10.5" cy="4.5" r=".7" fill="#8f8f8f"/></g></svg>
<svg style="left:573px;top:110px" width="16" height="16" viewBox="0 0 16 16"><g transform="translate(0 -1)"><rect x="0.500" y="4.500" width="14" height="11" fill="#dcdcdc" stroke="#8a8a8a"/><text x="5" y="14.300" font-size="9" text-anchor="middle" font-family="Liberation Sans,sans-serif" fill="#444">%</text><rect x="7" y="1" width="7" height="7" rx="1.2" fill="#8f8f8f"/><path d="M7.7 1.7L9 3M13.3 1.7L12 3M7.7 7.3L9 6M13.3 7.3L12 6" stroke="#fff" stroke-width=".9" stroke-opacity=".9"/><path d="M10.5 2.3L12.7 4.5L10.5 6.7L8.3 4.5z" fill="#fff"/><circle cx="10.5" cy="4.5" r=".7" fill="#8f8f8f"/></g></svg>
<svg style="left:596px;top:110px" width="16" height="16" viewBox="0 0 16 16"><g transform="translate(0 -1)"><rect x="0.500" y="4.500" width="14" height="11" fill="#dcdcdc" stroke="#8a8a8a"/><text x="6" y="14.300" font-size="6.5" text-anchor="middle" font-family="Liberation Sans,sans-serif" fill="#444">M29</text><rect x="7" y="1" width="7" height="7" rx="1.2" fill="#8f8f8f"/><path d="M7.7 1.7L9 3M13.3 1.7L12 3M7.7 7.3L9 6M13.3 7.3L12 6" stroke="#fff" stroke-width=".9" stroke-opacity=".9"/><path d="M10.5 2.3L12.7 4.5L10.5 6.7L8.3 4.5z" fill="#fff"/><circle cx="10.5" cy="4.5" r=".7" fill="#8f8f8f"/></g></svg>
<svg style="left:619px;top:110px" width="16" height="16" viewBox="0 0 16 16"><g transform="translate(0 -1)"><rect x="0.500" y="4.500" width="14" height="11" fill="#dcdcdc" stroke="#8a8a8a"/><text x="5.5" y="14.300" font-size="8" text-anchor="middle" font-family="Liberation Sans,sans-serif" fill="#444">PP</text><rect x="7" y="1" width="7" height="7" rx="1.2" fill="#8f8f8f"/><path d="M7.7 1.7L9 3M13.3 1.7L12 3M7.7 7.3L9 6M13.3 7.3L12 6" stroke="#fff" stroke-width=".9" stroke-opacity=".9"/><path d="M10.5 2.3L12.7 4.5L10.5 6.7L8.3 4.5z" fill="#fff"/><circle cx="10.5" cy="4.5" r=".7" fill="#8f8f8f"/></g></svg>
<svg style="left:642px;top:110px" width="16" height="16" viewBox="0 0 16 16"><g transform="translate(0 -1)"><rect x="0.500" y="4.500" width="14" height="11" fill="#dcdcdc" stroke="#8a8a8a"/><text x="6" y="14.300" font-size="8" text-anchor="middle" font-family="Liberation Sans,sans-serif" fill="#444">ФЗ</text><rect x="7" y="1" width="7" height="7" rx="1.2" fill="#8f8f8f"/><path d="M7.7 1.7L9 3M13.3 1.7L12 3M7.7 7.3L9 6M13.3 7.3L12 6" stroke="#fff" stroke-width=".9" stroke-opacity=".9"/><path d="M10.5 2.3L12.7 4.5L10.5 6.7L8.3 4.5z" fill="#fff"/><circle cx="10.5" cy="4.5" r=".7" fill="#8f8f8f"/></g></svg>
<svg style="left:671px;top:110px" width="16" height="16" viewBox="0 0 16 16"><g transform="translate(0 -1)"><path d="M0.500 2.500h5l1.500 2h8.500v10.500h-15z" fill="#f6c028" stroke="#d89a10"/><rect x="1.500" y="6.500" width="13" height="7.500" fill="#fbe060"/><rect x="1.500" y="10" width="13" height="4" fill="#f8d040"/><rect x="7" y="1" width="7" height="7" rx="1.2" fill="#f7941d"/><path d="M7.7 1.7L9 3M13.3 1.7L12 3M7.7 7.3L9 6M13.3 7.3L12 6" stroke="#fff" stroke-width=".9" stroke-opacity=".9"/><path d="M10.5 2.3L12.7 4.5L10.5 6.7L8.3 4.5z" fill="#fff"/><circle cx="10.5" cy="4.5" r=".7" fill="#f7941d"/></g></svg>
<svg style="left:698.5px;top:110px" width="16" height="16" viewBox="0 0 16 16"><g transform="translate(0 -1)"><path d="M8 8.300l-4.300-4.500M8 8.300l4.300-4.500" stroke="#8e8e8e" stroke-width="2" stroke-linecap="round"/><path d="M8 8.300l-4.700 4.700M8 8.300l4.700 4.700" stroke="#8e8e8e" stroke-width="1" stroke-linecap="round"/></g></svg>
<svg style="left:210px;top:199px" width="16" height="16" viewBox="0 0 16 16"><defs><linearGradient id="dg" x1="0" y1="0" x2="0" y2="1"><stop offset="0" stop-color="#dcdfe2"/><stop offset="1" stop-color="#fbfbfb"/></linearGradient></defs><path d="M3.500 0.500h9v13.500h-12v-10.500z" fill="url(#dg)" stroke="#a3a7ab"/><path d="M0.500 3.500h3v-3" fill="#fafafa" stroke="#a3a7ab"/><path d="M9 8h3v-2l3.200 3l-3.200 3v-2h-3z" fill="#1a6fe0"/></svg>
<svg style="left:232px;top:199px" width="16" height="16" viewBox="0 0 16 16"><path d="M5.500 0.500h9v13.500h-12v-10.500z" fill="url(#dg)" stroke="#a3a7ab"/><path d="M2.500 3.500h3v-3" fill="#fafafa" stroke="#a3a7ab"/><path d="M1 8h3v-2l3.200 3l-3.200 3v-2h-3z" fill="#1a6fe0"/></svg>
<svg style="left:264px;top:199px" width="16" height="16" viewBox="0 0 16 16"><path d="M1.200 1.200l5.300 4.800" stroke="#f00008" stroke-width="2.400" stroke-linecap="round"/><path d="M6 5.500l7.500 7" stroke="#f00008" stroke-width="1.100" stroke-linecap="round"/><path d="M13.500 0.800l-6 5.700" stroke="#f00008" stroke-width="1.100" stroke-linecap="round"/><path d="M7.500 6.500l-5.800 5.500" stroke="#f00008" stroke-width="2.200" stroke-linecap="round"/></svg>
<svg style="left:286px;top:199px" width="16" height="16" viewBox="0 0 16 16"><defs><linearGradient id="fg" x1="0" y1="0" x2="1" y2="1"><stop offset="0" stop-color="#fff040"/><stop offset="1" stop-color="#f89010"/></linearGradient></defs><path d="M1.500 4.500h5l1.500 1.500h7.500v8h-14z" fill="url(#fg)" stroke="#8a8a8a"/><path d="M4 -1v9M-0.500 3.500h9M0.800 0.300l6.400 6.400M7.200 0.300l-6.400 6.400" stroke="#ffe820" stroke-width="1.100"/><circle cx="4" cy="3.500" r="1.600" fill="#f01808"/></svg>
<svg style="left:317px;top:199px" width="16" height="16" viewBox="0 0 16 16"><path d="M2.500 8v6.500h11v-6.500l-5.500-5.500z" fill="#fff" stroke="#8a8a8a" stroke-width=".8"/><path d="M0.500 8.500l7.500-7.500l7.500 7.500" fill="none" stroke="#c8742a" stroke-width="1.500"/><rect x="3" y="0.500" width="2" height="4.500" fill="#f0a028" stroke="#b06a10" stroke-width=".5"/><rect x="4" y="9" width="2.500" height="5.500" fill="#f0b020" stroke="#c88a10" stroke-width=".5"/><rect x="8.500" y="8.500" width="3.500" height="3.500" fill="#3a6ae8"/><path d="M1 14.500h14" stroke="#5a5a5a" stroke-width="1"/></svg>
<svg style="left:340px;top:199px" width="16" height="16" viewBox="0 0 16 16"><path d="M0.500 9l8-8l7 3.500l-7.500 8.500z" fill="#38bc50"/><path d="M5 5.500l4-4l5.500 2.800" fill="none" stroke="#7fe090" stroke-width="1.200"/><path d="M0.500 9l7.500 4l7.500-8.500" fill="none" stroke="#1c8a38" stroke-width=".8"/><path d="M0.500 9.500v2.500l7.500 3.500l7.500-8.500v-2l-7.500 8.500z" fill="#e4ece8" stroke="#8aa898" stroke-width=".6"/></svg>
<svg style="left:363px;top:199px" width="16" height="16" viewBox="0 0 16 16"><path d="M3.5 0.5h7l3 3v9h-10z" fill="#b4ecc2" stroke="#58a272" stroke-width="1"/><path d="M5.5 6.5h6M5.5 8.5h6M5.5 10.5h6" stroke="#58a272" stroke-width=".9"/><path d="M0.5 2.5h7l3 3v9.5h-10z" fill="#a4e6b4" stroke="#58a272" stroke-width="1"/><path d="M2.5 8.5h6M2.5 10.5h6M2.5 12.5h6" stroke="#58a272" stroke-width=".9"/></svg>
<svg style="left:386px;top:199px" width="16" height="16" viewBox="0 0 16 16"><path d="M2.5 1.5h8l3 3v10h-11z" fill="#aeeabc" stroke="#6cae86" stroke-width="1"/><path d="M4.5 7.5h7M4.5 9.5h7M4.5 11.5h7" stroke="#6cae86" stroke-width=".9"/></svg>
<svg style="left:213px;top:629px" width="14" height="15" viewBox="0 0 16 16"><path d="M3.500 1.500h9v13h-12v-10z" fill="#f4f8fb" stroke="#9ab0c0"/><path d="M0.500 4.500h3v-3" fill="#fff" stroke="#9ab0c0"/><path d="M3 7.500h6M3 9.500h5M3 11.500h4" stroke="#c4d4e0" stroke-width=".9"/><path d="M3.500 12.500l1-3l8-8l2 2l-8 8z" fill="#f8d020" stroke="#c89a10" stroke-width=".6"/><path d="M12.500 1.500l1-1l2 2l-1 1z" fill="#e83020"/><path d="M3.500 12.500l.6-1.800l1.200 1.200z" fill="#333"/></svg>
<svg style="left:214px;top:653px" width="13" height="10" viewBox="0 0 14 10"><path d="M2.500 7c1.500-4 8-4.500 10 1.500" fill="none" stroke="#9a9a9a" stroke-width="2.200"/><path d="M0.500 3l.8 5.500l4.700-2z" fill="#9a9a9a"/></svg>
<svg style="left:1126px;top:818px" width="16" height="16" viewBox="0 0 16 16"><rect x="1" y="1" width="14" height="14" rx="5" fill="#9a9a9a"/><rect x="7" y="3.500" width="2.200" height="2.200" fill="#f0f0f0"/><rect x="7" y="7" width="2.200" height="5.500" fill="#f0f0f0"/><path d="M0.500 0.500l15 15" stroke="#f01020" stroke-width="1.600" stroke-linecap="round"/></svg>
<svg style="left:0px;top:0px" width="1187" height="843" viewBox="0 0 1187 843"><rect x="236.3" y="283.9" width="307.4" height="17.9" fill="none" stroke="#f00" stroke-width="3.2"/><rect x="339.2" y="565.9" width="186.7" height="17.1" fill="none" stroke="#f00" stroke-width="3.2"/></svg>
</body></html>
